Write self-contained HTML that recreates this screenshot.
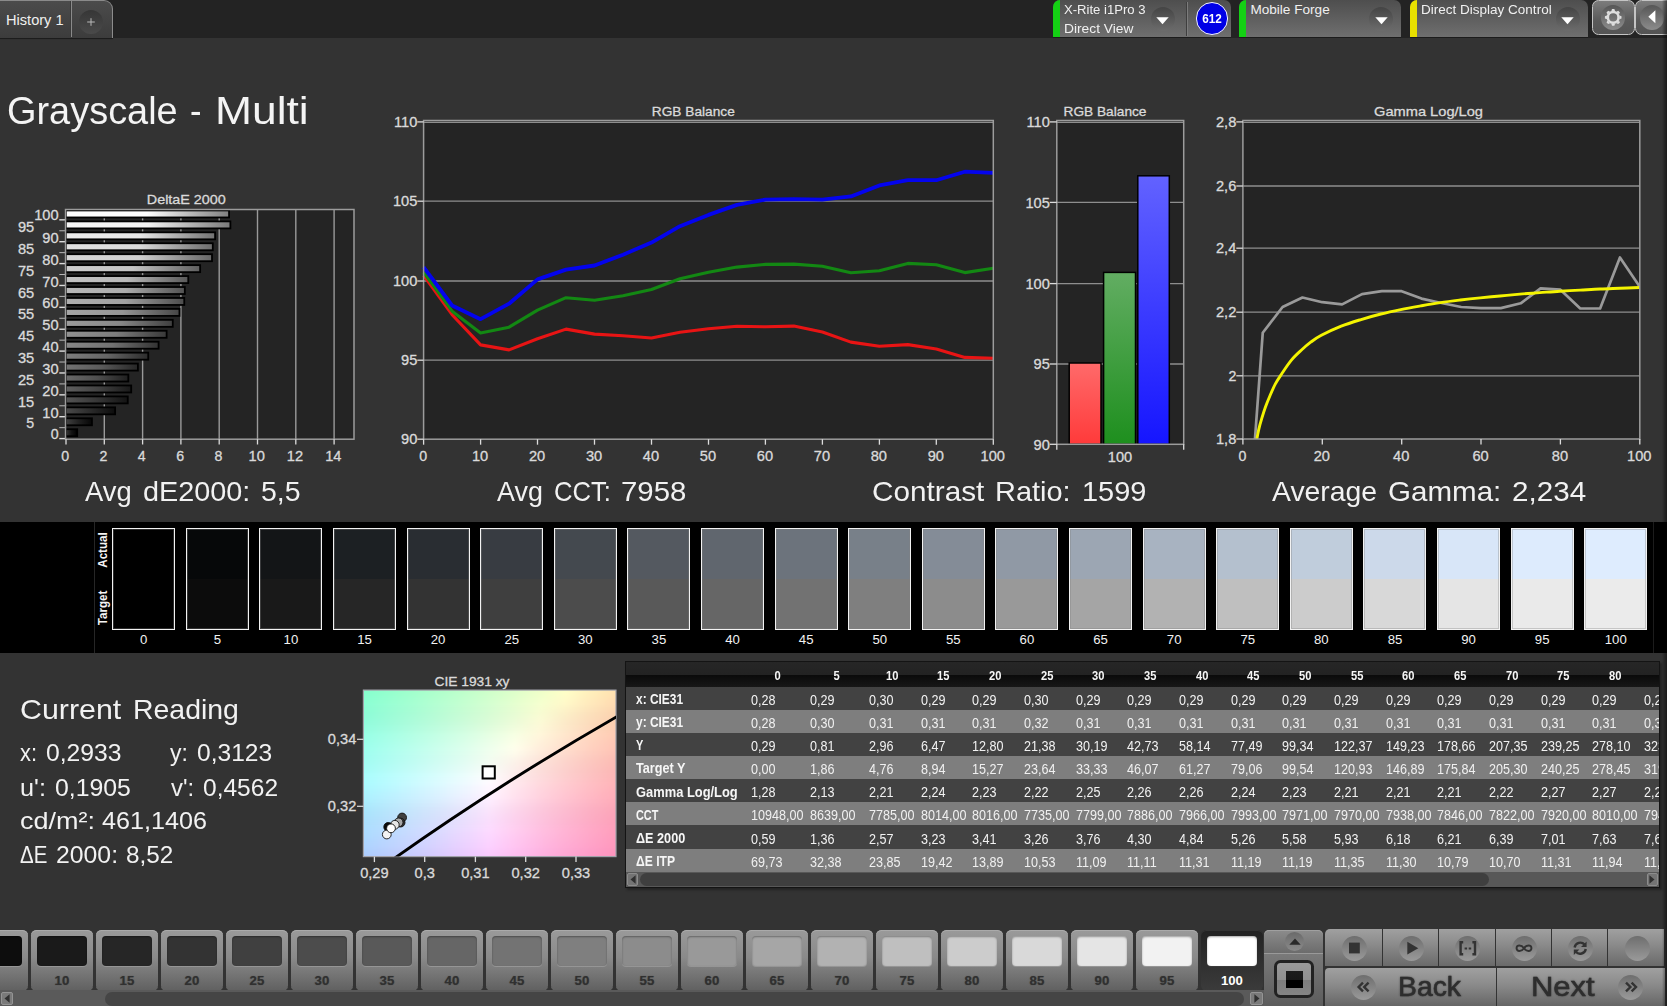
<!DOCTYPE html><html lang="en"><head><meta charset="utf-8"><title>Grayscale - Multi</title><style>
*{margin:0;padding:0;box-sizing:border-box}
html,body{width:1667px;height:1006px;overflow:hidden;background:#333333}
body{font-family:"Liberation Sans",sans-serif;position:relative;color:#e6e6e6}
.t{position:absolute;white-space:nowrap;line-height:1;display:inline-block}
.abs{position:absolute}
svg{position:absolute;overflow:visible}
svg text{font-family:"Liberation Sans",sans-serif}
</style></head><body>
<div id="topbar" class="abs" style="left:0;top:0;width:1667px;height:38px;background:#232323">
<div class="abs" style="left:-1px;top:0;width:114px;height:37.5px;border-radius:0 9px 0 0;background:linear-gradient(#4b4b4b,#3c3c3c);border-top:1px solid #8a8a8a;border-right:1px solid #8c8c8c;box-shadow:0 1px 1px #1a1a1a"></div>
<div class="abs" style="left:71px;top:1px;width:1px;height:36px;background:#8a8a8a"></div>
<div class="abs" style="left:70px;top:1px;width:1px;height:36px;background:#3a3a3a"></div>
<span class="t" style="left:6.00px;top:13.24px;font-size:14.60px;color:#f0f0ee;">History 1</span>
<div class="abs" style="left:78.6px;top:9.5px;width:24px;height:24px;border-radius:50%;background:linear-gradient(#363636,#4a4a4a)"></div>
<svg style="left:86px;top:17px" width="10" height="10" viewBox="0 0 10 10"><path d="M5 1.2V8.8M1.2 5H8.8" stroke="#b8b8b8" stroke-width="1" fill="none"/></svg>
<div class="abs" style="left:1052.7px;top:0;width:178.3px;height:36.5px;border-radius:7px 7px 0 0;background:linear-gradient(#4e4e4e,#6f6f6f);overflow:hidden;box-shadow:0 1px 0 #1c1c1c"><div class="abs" style="left:0;top:0;width:7px;height:37px;background:#14d014"></div></div>
<span class="t" style="left:1064.20px;top:3.09px;font-size:13.60px;color:#f0f0f0;transform:scaleX(0.9640);transform-origin:0 0;">X-Rite i1Pro 3</span>
<span class="t" style="left:1064.20px;top:21.99px;font-size:13.60px;color:#f0f0f0;transform:scaleX(1.0143);transform-origin:0 0;">Direct View</span>
<div class="abs" style="left:1150.5px;top:6.6px;width:24px;height:24px;border-radius:50%;background:linear-gradient(#444,#6c6c6c)"></div>
<svg style="left:1156.0px;top:16.5px" width="13" height="8" viewBox="0 0 13 8"><path d="M0.3 0.3H12.7L6.5 7.2Z" fill="#ffffff"/></svg>
<div class="abs" style="left:1186px;top:2px;width:1px;height:34px;background:#3e3e3e"></div><div class="abs" style="left:1187px;top:2px;width:1px;height:34px;background:#7c7c7c"></div>
<div class="abs" style="left:1195.7px;top:2.3px;width:32.6px;height:32.6px;border-radius:50%;background:#0000e6;border:1.5px solid #f4f4ff"></div>
<span class="t" style="left:1201.99px;top:12.64px;font-size:12.00px;color:#ffffff;font-weight:700;transform:scaleX(0.9741);transform-origin:50% 0;">612</span>
<div class="abs" style="left:1238.9px;top:0;width:162.1px;height:36.5px;border-radius:7px 7px 0 0;background:linear-gradient(#4e4e4e,#6f6f6f);overflow:hidden;box-shadow:0 1px 0 #1c1c1c"><div class="abs" style="left:0;top:0;width:7px;height:37px;background:#14d014"></div></div>
<span class="t" style="left:1250.40px;top:3.09px;font-size:13.60px;color:#f0f0f0;">Mobile Forge</span>
<div class="abs" style="left:1369.4px;top:6.6px;width:24px;height:24px;border-radius:50%;background:linear-gradient(#444,#6c6c6c)"></div>
<svg style="left:1374.9px;top:16.5px" width="13" height="8" viewBox="0 0 13 8"><path d="M0.3 0.3H12.7L6.5 7.2Z" fill="#ffffff"/></svg>
<div class="abs" style="left:1409.5px;top:0;width:178.0px;height:36.5px;border-radius:7px 7px 0 0;background:linear-gradient(#4e4e4e,#6f6f6f);overflow:hidden;box-shadow:0 1px 0 #1c1c1c"><div class="abs" style="left:0;top:0;width:7px;height:37px;background:#e8e000"></div></div>
<span class="t" style="left:1421.00px;top:3.09px;font-size:13.60px;color:#f0f0f0;transform:scaleX(0.9939);transform-origin:0 0;">Direct Display Control</span>
<div class="abs" style="left:1555.5px;top:6.6px;width:24px;height:24px;border-radius:50%;background:linear-gradient(#444,#6c6c6c)"></div>
<svg style="left:1561.0px;top:16.5px" width="13" height="8" viewBox="0 0 13 8"><path d="M0.3 0.3H12.7L6.5 7.2Z" fill="#ffffff"/></svg>
<div class="abs" style="left:1591.5px;top:-0.2px;width:43.3px;height:34.8px;border-radius:6.5px;border:1.3px solid #c4c4c4;background:linear-gradient(#7c7c7c,#5a5a5a 60%,#545454)"></div>
<div class="abs" style="left:1601px;top:5.3px;width:24.4px;height:24.4px;border-radius:50%;background:linear-gradient(#565656,#8c8c8c)"></div>
<svg style="left:0;top:0" width="1667" height="38" viewBox="0 0 1667 38"><g transform="translate(1613.2 17.4)"><path d="M-1.9 -6.2L-1.2 -8.3H1.2L1.9 -6.2Z" transform="rotate(0)" fill="#dedede"/><path d="M-1.9 -6.2L-1.2 -8.3H1.2L1.9 -6.2Z" transform="rotate(45)" fill="#dedede"/><path d="M-1.9 -6.2L-1.2 -8.3H1.2L1.9 -6.2Z" transform="rotate(90)" fill="#dedede"/><path d="M-1.9 -6.2L-1.2 -8.3H1.2L1.9 -6.2Z" transform="rotate(135)" fill="#dedede"/><path d="M-1.9 -6.2L-1.2 -8.3H1.2L1.9 -6.2Z" transform="rotate(180)" fill="#dedede"/><path d="M-1.9 -6.2L-1.2 -8.3H1.2L1.9 -6.2Z" transform="rotate(225)" fill="#dedede"/><path d="M-1.9 -6.2L-1.2 -8.3H1.2L1.9 -6.2Z" transform="rotate(270)" fill="#dedede"/><path d="M-1.9 -6.2L-1.2 -8.3H1.2L1.9 -6.2Z" transform="rotate(315)" fill="#dedede"/><circle r="5.35" fill="none" stroke="#dedede" stroke-width="2.5"/></g></svg>
<div class="abs" style="left:1634.8px;top:-0.2px;width:44px;height:34.8px;border-radius:6.5px;border:1.3px solid #c4c4c4;background:linear-gradient(#7c7c7c,#5a5a5a 60%,#545454)"></div>
<div class="abs" style="left:1639.6px;top:5.3px;width:24.4px;height:24.4px;border-radius:50%;background:linear-gradient(#565656,#8c8c8c)"></div>
<svg style="left:1647.8px;top:10px" width="8" height="14" viewBox="0 0 8 14"><path d="M7.4 0.3V13.2L0.3 6.7Z" fill="#ffffff"/></svg>
</div>
<h1 class="abs" style="left:0;top:0;font-weight:400"><span class="t" style="left:6.90px;top:90.72px;font-size:39.20px;color:#f4f4f4;transform:scaleX(0.9677);transform-origin:0 0;">Grayscale</span><span class="t" style="left:189.80px;top:90.72px;font-size:39.20px;color:#f4f4f4;transform:scaleX(0.8813);transform-origin:0 0;">-</span><span class="t" style="left:214.60px;top:90.72px;font-size:39.20px;color:#f4f4f4;transform:scaleX(1.1328);transform-origin:0 0;">Multi</span></h1>
<svg id="charts" style="left:0;top:90px" width="1667" height="390" viewBox="0 90 1667 390">
<defs>
<linearGradient id="db0" x1="0" x2="1" y1="0" y2="0"><stop offset="0" stop-color="rgb(56,56,56)"/><stop offset="0.5" stop-color="rgb(20,20,20)"/><stop offset="1" stop-color="rgb(0,0,0)"/></linearGradient>
<linearGradient id="db1" x1="0" x2="1" y1="0" y2="0"><stop offset="0" stop-color="rgb(66,66,66)"/><stop offset="0.5" stop-color="rgb(32,32,32)"/><stop offset="1" stop-color="rgb(6,6,6)"/></linearGradient>
<linearGradient id="db2" x1="0" x2="1" y1="0" y2="0"><stop offset="0" stop-color="rgb(75,75,75)"/><stop offset="0.5" stop-color="rgb(43,43,43)"/><stop offset="1" stop-color="rgb(12,12,12)"/></linearGradient>
<linearGradient id="db3" x1="0" x2="1" y1="0" y2="0"><stop offset="0" stop-color="rgb(85,85,85)"/><stop offset="0.5" stop-color="rgb(55,55,55)"/><stop offset="1" stop-color="rgb(19,19,19)"/></linearGradient>
<linearGradient id="db4" x1="0" x2="1" y1="0" y2="0"><stop offset="0" stop-color="rgb(95,95,95)"/><stop offset="0.5" stop-color="rgb(67,67,67)"/><stop offset="1" stop-color="rgb(25,25,25)"/></linearGradient>
<linearGradient id="db5" x1="0" x2="1" y1="0" y2="0"><stop offset="0" stop-color="rgb(105,105,105)"/><stop offset="0.5" stop-color="rgb(79,79,79)"/><stop offset="1" stop-color="rgb(31,31,31)"/></linearGradient>
<linearGradient id="db6" x1="0" x2="1" y1="0" y2="0"><stop offset="0" stop-color="rgb(115,115,115)"/><stop offset="0.5" stop-color="rgb(90,90,90)"/><stop offset="1" stop-color="rgb(38,38,38)"/></linearGradient>
<linearGradient id="db7" x1="0" x2="1" y1="0" y2="0"><stop offset="0" stop-color="rgb(125,125,125)"/><stop offset="0.5" stop-color="rgb(102,102,102)"/><stop offset="1" stop-color="rgb(44,44,44)"/></linearGradient>
<linearGradient id="db8" x1="0" x2="1" y1="0" y2="0"><stop offset="0" stop-color="rgb(135,135,135)"/><stop offset="0.5" stop-color="rgb(114,114,114)"/><stop offset="1" stop-color="rgb(51,51,51)"/></linearGradient>
<linearGradient id="db9" x1="0" x2="1" y1="0" y2="0"><stop offset="0" stop-color="rgb(145,145,145)"/><stop offset="0.5" stop-color="rgb(125,125,125)"/><stop offset="1" stop-color="rgb(57,57,57)"/></linearGradient>
<linearGradient id="db10" x1="0" x2="1" y1="0" y2="0"><stop offset="0" stop-color="rgb(155,155,155)"/><stop offset="0.5" stop-color="rgb(137,137,137)"/><stop offset="1" stop-color="rgb(63,63,63)"/></linearGradient>
<linearGradient id="db11" x1="0" x2="1" y1="0" y2="0"><stop offset="0" stop-color="rgb(165,165,165)"/><stop offset="0.5" stop-color="rgb(149,149,149)"/><stop offset="1" stop-color="rgb(70,70,70)"/></linearGradient>
<linearGradient id="db12" x1="0" x2="1" y1="0" y2="0"><stop offset="0" stop-color="rgb(175,175,175)"/><stop offset="0.5" stop-color="rgb(161,161,161)"/><stop offset="1" stop-color="rgb(76,76,76)"/></linearGradient>
<linearGradient id="db13" x1="0" x2="1" y1="0" y2="0"><stop offset="0" stop-color="rgb(185,185,185)"/><stop offset="0.5" stop-color="rgb(172,172,172)"/><stop offset="1" stop-color="rgb(82,82,82)"/></linearGradient>
<linearGradient id="db14" x1="0" x2="1" y1="0" y2="0"><stop offset="0" stop-color="rgb(195,195,195)"/><stop offset="0.5" stop-color="rgb(184,184,184)"/><stop offset="1" stop-color="rgb(89,89,89)"/></linearGradient>
<linearGradient id="db15" x1="0" x2="1" y1="0" y2="0"><stop offset="0" stop-color="rgb(205,205,205)"/><stop offset="0.5" stop-color="rgb(196,196,196)"/><stop offset="1" stop-color="rgb(95,95,95)"/></linearGradient>
<linearGradient id="db16" x1="0" x2="1" y1="0" y2="0"><stop offset="0" stop-color="rgb(215,215,215)"/><stop offset="0.5" stop-color="rgb(208,208,208)"/><stop offset="1" stop-color="rgb(102,102,102)"/></linearGradient>
<linearGradient id="db17" x1="0" x2="1" y1="0" y2="0"><stop offset="0" stop-color="rgb(225,225,225)"/><stop offset="0.5" stop-color="rgb(219,219,219)"/><stop offset="1" stop-color="rgb(108,108,108)"/></linearGradient>
<linearGradient id="db18" x1="0" x2="1" y1="0" y2="0"><stop offset="0" stop-color="rgb(235,235,235)"/><stop offset="0.5" stop-color="rgb(231,231,231)"/><stop offset="1" stop-color="rgb(114,114,114)"/></linearGradient>
<linearGradient id="db19" x1="0" x2="1" y1="0" y2="0"><stop offset="0" stop-color="rgb(245,245,245)"/><stop offset="0.5" stop-color="rgb(243,243,243)"/><stop offset="1" stop-color="rgb(121,121,121)"/></linearGradient>
<linearGradient id="db20" x1="0" x2="1" y1="0" y2="0"><stop offset="0" stop-color="rgb(254,254,254)"/><stop offset="0.5" stop-color="rgb(254,254,254)"/><stop offset="1" stop-color="rgb(127,127,127)"/></linearGradient>
<linearGradient id="gr" x1="0" x2="0" y1="0" y2="1"><stop offset="0" stop-color="#ff6a6a"/><stop offset="1" stop-color="#ff3a3a"/></linearGradient>
<linearGradient id="gg" x1="0" x2="0" y1="0" y2="1"><stop offset="0" stop-color="#62ad62"/><stop offset="1" stop-color="#1e8f1e"/></linearGradient>
<linearGradient id="gb" x1="0" x2="0" y1="0" y2="1"><stop offset="0" stop-color="#6262ff"/><stop offset="1" stop-color="#1515ff"/></linearGradient>
<clipPath id="cg"><rect x="1243" y="121" width="397" height="318"/></clipPath>
</defs>
<g id="chart-deltae">
<text x="186.30" y="203.60" font-size="13.40" fill="#dadada" text-anchor="middle" textLength="79.00" lengthAdjust="spacingAndGlyphs" stroke="#dadada" stroke-width="0.3">DeltaE 2000</text>
<rect x="65.5" y="209.5" width="288.5" height="229.7" fill="#242424"/>
<line x1="104.3" y1="209.5" x2="104.3" y2="439.2" stroke="#9a9a9a" stroke-width="1.4"/>
<line x1="142.6" y1="209.5" x2="142.6" y2="439.2" stroke="#9a9a9a" stroke-width="1.4"/>
<line x1="180.9" y1="209.5" x2="180.9" y2="439.2" stroke="#9a9a9a" stroke-width="1.4"/>
<line x1="219.2" y1="209.5" x2="219.2" y2="439.2" stroke="#9a9a9a" stroke-width="1.4"/>
<line x1="257.5" y1="209.5" x2="257.5" y2="439.2" stroke="#9a9a9a" stroke-width="1.4"/>
<line x1="295.8" y1="209.5" x2="295.8" y2="439.2" stroke="#9a9a9a" stroke-width="1.4"/>
<line x1="334.1" y1="209.5" x2="334.1" y2="439.2" stroke="#9a9a9a" stroke-width="1.4"/>
<rect x="65.80" y="210.45" width="163.26" height="7.00" fill="url(#db20)" stroke="#000" stroke-width="1.8"/>
<line x1="59.3" y1="219.84" x2="65.5" y2="219.84" stroke="#dcdcdc" stroke-width="1.4"/>
<text x="58.60" y="219.97" font-size="14.20" fill="#dadada" text-anchor="end" textLength="24.40" lengthAdjust="spacingAndGlyphs" stroke="#dadada" stroke-width="0.3">100</text>
<rect x="65.80" y="221.39" width="164.60" height="7.00" fill="url(#db19)" stroke="#000" stroke-width="1.8"/>
<line x1="59.3" y1="230.78" x2="65.5" y2="230.78" stroke="#dcdcdc" stroke-width="0.8"/>
<text x="34.20" y="231.91" font-size="14.20" fill="#dadada" text-anchor="end" textLength="16.27" lengthAdjust="spacingAndGlyphs" stroke="#dadada" stroke-width="0.3">95</text>
<rect x="65.80" y="232.33" width="149.28" height="7.00" fill="url(#db18)" stroke="#000" stroke-width="1.8"/>
<line x1="59.3" y1="241.71" x2="65.5" y2="241.71" stroke="#dcdcdc" stroke-width="1.4"/>
<text x="58.60" y="242.85" font-size="14.20" fill="#dadada" text-anchor="end" textLength="16.27" lengthAdjust="spacingAndGlyphs" stroke="#dadada" stroke-width="0.3">90</text>
<rect x="65.80" y="243.26" width="146.98" height="7.00" fill="url(#db17)" stroke="#000" stroke-width="1.8"/>
<line x1="59.3" y1="252.65" x2="65.5" y2="252.65" stroke="#dcdcdc" stroke-width="0.8"/>
<text x="34.20" y="253.78" font-size="14.20" fill="#dadada" text-anchor="end" textLength="16.27" lengthAdjust="spacingAndGlyphs" stroke="#dadada" stroke-width="0.3">85</text>
<rect x="65.80" y="254.20" width="146.21" height="7.00" fill="url(#db16)" stroke="#000" stroke-width="1.8"/>
<line x1="59.3" y1="263.59" x2="65.5" y2="263.59" stroke="#dcdcdc" stroke-width="1.4"/>
<text x="58.60" y="264.72" font-size="14.20" fill="#dadada" text-anchor="end" textLength="16.27" lengthAdjust="spacingAndGlyphs" stroke="#dadada" stroke-width="0.3">80</text>
<rect x="65.80" y="265.14" width="134.34" height="7.00" fill="url(#db15)" stroke="#000" stroke-width="1.8"/>
<line x1="59.3" y1="274.53" x2="65.5" y2="274.53" stroke="#dcdcdc" stroke-width="0.8"/>
<text x="34.20" y="275.66" font-size="14.20" fill="#dadada" text-anchor="end" textLength="16.27" lengthAdjust="spacingAndGlyphs" stroke="#dadada" stroke-width="0.3">75</text>
<rect x="65.80" y="276.08" width="122.47" height="7.00" fill="url(#db14)" stroke="#000" stroke-width="1.8"/>
<line x1="59.3" y1="285.47" x2="65.5" y2="285.47" stroke="#dcdcdc" stroke-width="1.4"/>
<text x="58.60" y="286.60" font-size="14.20" fill="#dadada" text-anchor="end" textLength="16.27" lengthAdjust="spacingAndGlyphs" stroke="#dadada" stroke-width="0.3">70</text>
<rect x="65.80" y="287.02" width="119.02" height="7.00" fill="url(#db13)" stroke="#000" stroke-width="1.8"/>
<line x1="59.3" y1="296.40" x2="65.5" y2="296.40" stroke="#dcdcdc" stroke-width="0.8"/>
<text x="34.20" y="297.54" font-size="14.20" fill="#dadada" text-anchor="end" textLength="16.27" lengthAdjust="spacingAndGlyphs" stroke="#dadada" stroke-width="0.3">65</text>
<rect x="65.80" y="297.95" width="118.45" height="7.00" fill="url(#db12)" stroke="#000" stroke-width="1.8"/>
<line x1="59.3" y1="307.34" x2="65.5" y2="307.34" stroke="#dcdcdc" stroke-width="1.4"/>
<text x="58.60" y="308.47" font-size="14.20" fill="#dadada" text-anchor="end" textLength="16.27" lengthAdjust="spacingAndGlyphs" stroke="#dadada" stroke-width="0.3">60</text>
<rect x="65.80" y="308.89" width="113.66" height="7.00" fill="url(#db11)" stroke="#000" stroke-width="1.8"/>
<line x1="59.3" y1="318.28" x2="65.5" y2="318.28" stroke="#dcdcdc" stroke-width="0.8"/>
<text x="34.20" y="319.41" font-size="14.20" fill="#dadada" text-anchor="end" textLength="16.27" lengthAdjust="spacingAndGlyphs" stroke="#dadada" stroke-width="0.3">55</text>
<rect x="65.80" y="319.83" width="106.96" height="7.00" fill="url(#db10)" stroke="#000" stroke-width="1.8"/>
<line x1="59.3" y1="329.22" x2="65.5" y2="329.22" stroke="#dcdcdc" stroke-width="1.4"/>
<text x="58.60" y="330.35" font-size="14.20" fill="#dadada" text-anchor="end" textLength="16.27" lengthAdjust="spacingAndGlyphs" stroke="#dadada" stroke-width="0.3">50</text>
<rect x="65.80" y="330.77" width="100.83" height="7.00" fill="url(#db9)" stroke="#000" stroke-width="1.8"/>
<line x1="59.3" y1="340.16" x2="65.5" y2="340.16" stroke="#dcdcdc" stroke-width="0.8"/>
<text x="34.20" y="341.29" font-size="14.20" fill="#dadada" text-anchor="end" textLength="16.27" lengthAdjust="spacingAndGlyphs" stroke="#dadada" stroke-width="0.3">45</text>
<rect x="65.80" y="341.71" width="92.79" height="7.00" fill="url(#db8)" stroke="#000" stroke-width="1.8"/>
<line x1="59.3" y1="351.10" x2="65.5" y2="351.10" stroke="#dcdcdc" stroke-width="1.4"/>
<text x="58.60" y="352.23" font-size="14.20" fill="#dadada" text-anchor="end" textLength="16.27" lengthAdjust="spacingAndGlyphs" stroke="#dadada" stroke-width="0.3">40</text>
<rect x="65.80" y="352.65" width="82.44" height="7.00" fill="url(#db7)" stroke="#000" stroke-width="1.8"/>
<line x1="59.3" y1="362.03" x2="65.5" y2="362.03" stroke="#dcdcdc" stroke-width="0.8"/>
<text x="34.20" y="363.16" font-size="14.20" fill="#dadada" text-anchor="end" textLength="16.27" lengthAdjust="spacingAndGlyphs" stroke="#dadada" stroke-width="0.3">35</text>
<rect x="65.80" y="363.58" width="72.10" height="7.00" fill="url(#db6)" stroke="#000" stroke-width="1.8"/>
<line x1="59.3" y1="372.97" x2="65.5" y2="372.97" stroke="#dcdcdc" stroke-width="1.4"/>
<text x="58.60" y="374.10" font-size="14.20" fill="#dadada" text-anchor="end" textLength="16.27" lengthAdjust="spacingAndGlyphs" stroke="#dadada" stroke-width="0.3">30</text>
<rect x="65.80" y="374.52" width="62.53" height="7.00" fill="url(#db5)" stroke="#000" stroke-width="1.8"/>
<line x1="59.3" y1="383.91" x2="65.5" y2="383.91" stroke="#dcdcdc" stroke-width="0.8"/>
<text x="34.20" y="385.04" font-size="14.20" fill="#dadada" text-anchor="end" textLength="16.27" lengthAdjust="spacingAndGlyphs" stroke="#dadada" stroke-width="0.3">25</text>
<rect x="65.80" y="385.46" width="65.40" height="7.00" fill="url(#db4)" stroke="#000" stroke-width="1.8"/>
<line x1="59.3" y1="394.85" x2="65.5" y2="394.85" stroke="#dcdcdc" stroke-width="1.4"/>
<text x="58.60" y="395.98" font-size="14.20" fill="#dadada" text-anchor="end" textLength="16.27" lengthAdjust="spacingAndGlyphs" stroke="#dadada" stroke-width="0.3">20</text>
<rect x="65.80" y="396.40" width="61.95" height="7.00" fill="url(#db3)" stroke="#000" stroke-width="1.8"/>
<line x1="59.3" y1="405.79" x2="65.5" y2="405.79" stroke="#dcdcdc" stroke-width="0.8"/>
<text x="34.20" y="406.92" font-size="14.20" fill="#dadada" text-anchor="end" textLength="16.27" lengthAdjust="spacingAndGlyphs" stroke="#dadada" stroke-width="0.3">15</text>
<rect x="65.80" y="407.34" width="49.32" height="7.00" fill="url(#db2)" stroke="#000" stroke-width="1.8"/>
<line x1="59.3" y1="416.72" x2="65.5" y2="416.72" stroke="#dcdcdc" stroke-width="1.4"/>
<text x="58.60" y="417.85" font-size="14.20" fill="#dadada" text-anchor="end" textLength="16.27" lengthAdjust="spacingAndGlyphs" stroke="#dadada" stroke-width="0.3">10</text>
<rect x="65.80" y="418.27" width="26.14" height="7.00" fill="url(#db1)" stroke="#000" stroke-width="1.8"/>
<line x1="59.3" y1="427.66" x2="65.5" y2="427.66" stroke="#dcdcdc" stroke-width="0.8"/>
<text x="34.20" y="428.29" font-size="14.20" fill="#dadada" text-anchor="end" stroke="#dadada" stroke-width="0.3">5</text>
<rect x="65.80" y="429.21" width="11.40" height="7.00" fill="url(#db0)" stroke="#000" stroke-width="1.8"/>
<line x1="59.3" y1="438.60" x2="65.5" y2="438.60" stroke="#dcdcdc" stroke-width="1.4"/>
<text x="58.60" y="438.73" font-size="14.20" fill="#dadada" text-anchor="end" stroke="#dadada" stroke-width="0.3">0</text>
<rect x="65.5" y="209.5" width="288.5" height="229.7" fill="none" stroke="#9c9c9c" stroke-width="1.5"/>
<line x1="66.0" y1="439.2" x2="66.0" y2="444.5" stroke="#dcdcdc" stroke-width="1.3"/>
<text x="65.20" y="461.20" font-size="14.20" fill="#dadada" text-anchor="middle" stroke="#dadada" stroke-width="0.3">0</text>
<line x1="104.3" y1="439.2" x2="104.3" y2="444.5" stroke="#dcdcdc" stroke-width="1.3"/>
<text x="103.50" y="461.20" font-size="14.20" fill="#dadada" text-anchor="middle" stroke="#dadada" stroke-width="0.3">2</text>
<line x1="142.6" y1="439.2" x2="142.6" y2="444.5" stroke="#dcdcdc" stroke-width="1.3"/>
<text x="141.80" y="461.20" font-size="14.20" fill="#dadada" text-anchor="middle" stroke="#dadada" stroke-width="0.3">4</text>
<line x1="180.9" y1="439.2" x2="180.9" y2="444.5" stroke="#dcdcdc" stroke-width="1.3"/>
<text x="180.10" y="461.20" font-size="14.20" fill="#dadada" text-anchor="middle" stroke="#dadada" stroke-width="0.3">6</text>
<line x1="219.2" y1="439.2" x2="219.2" y2="444.5" stroke="#dcdcdc" stroke-width="1.3"/>
<text x="218.40" y="461.20" font-size="14.20" fill="#dadada" text-anchor="middle" stroke="#dadada" stroke-width="0.3">8</text>
<line x1="257.5" y1="439.2" x2="257.5" y2="444.5" stroke="#dcdcdc" stroke-width="1.3"/>
<text x="256.70" y="461.20" font-size="14.20" fill="#dadada" text-anchor="middle" textLength="16.27" lengthAdjust="spacingAndGlyphs" stroke="#dadada" stroke-width="0.3">10</text>
<line x1="295.8" y1="439.2" x2="295.8" y2="444.5" stroke="#dcdcdc" stroke-width="1.3"/>
<text x="295.00" y="461.20" font-size="14.20" fill="#dadada" text-anchor="middle" textLength="16.27" lengthAdjust="spacingAndGlyphs" stroke="#dadada" stroke-width="0.3">12</text>
<line x1="334.1" y1="439.2" x2="334.1" y2="444.5" stroke="#dcdcdc" stroke-width="1.3"/>
<text x="333.30" y="461.20" font-size="14.20" fill="#dadada" text-anchor="middle" textLength="16.27" lengthAdjust="spacingAndGlyphs" stroke="#dadada" stroke-width="0.3">14</text>
</g>
<g id="chart-rgb-balance">
<text x="693.30" y="115.60" font-size="13.40" fill="#dadada" text-anchor="middle" textLength="83.00" lengthAdjust="spacingAndGlyphs" stroke="#dadada" stroke-width="0.3">RGB Balance</text>
<rect x="423.6" y="120.5" width="569.7" height="318.7" fill="#242424"/>
<line x1="423.6" y1="122.4" x2="993.3" y2="122.4" stroke="#8e8e8e" stroke-width="1.3"/>
<line x1="423.6" y1="201.2" x2="993.3" y2="201.2" stroke="#8e8e8e" stroke-width="1.3"/>
<line x1="423.6" y1="281.0" x2="993.3" y2="281.0" stroke="#8e8e8e" stroke-width="1.3"/>
<line x1="423.6" y1="360.2" x2="993.3" y2="360.2" stroke="#8e8e8e" stroke-width="1.3"/>
<path d="M423.60 275.30L452.09 314.70L480.57 344.90L509.06 349.90L537.54 338.70L566.02 329.10L594.51 334.10L623.00 335.70L651.48 338.00L679.96 332.30L708.45 328.80L736.93 326.30L765.42 326.80L793.90 326.10L822.39 332.00L850.88 342.10L879.36 346.20L907.85 344.60L936.33 349.00L964.81 357.40L993.30 358.30" fill="none" stroke="#e81414" stroke-width="3.1" stroke-linejoin="round" stroke-linecap="butt"/>
<path d="M423.60 272.40L452.09 311.20L480.57 333.00L509.06 327.20L537.54 310.10L566.02 297.70L594.51 300.30L623.00 295.70L651.48 289.50L679.96 278.80L708.45 272.30L736.93 267.10L765.42 264.40L793.90 264.10L822.39 266.20L850.88 272.80L879.36 270.80L907.85 263.40L936.33 264.80L964.81 272.60L993.30 268.20" fill="none" stroke="#138813" stroke-width="3.1" stroke-linejoin="round" stroke-linecap="butt"/>
<path d="M423.60 267.10L452.09 305.50L480.57 319.20L509.06 303.70L537.54 279.40L566.02 269.60L594.51 265.50L623.00 254.70L651.48 242.60L679.96 226.20L708.45 214.90L736.93 204.90L765.42 199.60L793.90 199.20L822.39 199.60L850.88 196.40L879.36 185.40L907.85 180.20L936.33 180.20L964.81 171.70L993.30 172.90" fill="none" stroke="#0404ee" stroke-width="3.8" stroke-linejoin="round" stroke-linecap="butt"/>
<rect x="423.6" y="120.5" width="569.7" height="318.7" fill="none" stroke="#9c9c9c" stroke-width="1.5"/>
<line x1="417.3" y1="121.9" x2="423.6" y2="121.9" stroke="#dcdcdc" stroke-width="1.3"/>
<text x="417.30" y="127.10" font-size="14.20" fill="#dadada" text-anchor="end" textLength="23.31" lengthAdjust="spacingAndGlyphs" stroke="#dadada" stroke-width="0.3">110</text>
<line x1="417.3" y1="201.2" x2="423.6" y2="201.2" stroke="#dcdcdc" stroke-width="1.3"/>
<text x="417.30" y="206.40" font-size="14.20" fill="#dadada" text-anchor="end" textLength="24.40" lengthAdjust="spacingAndGlyphs" stroke="#dadada" stroke-width="0.3">105</text>
<line x1="417.3" y1="281.0" x2="423.6" y2="281.0" stroke="#dcdcdc" stroke-width="1.3"/>
<text x="417.30" y="286.20" font-size="14.20" fill="#dadada" text-anchor="end" textLength="24.40" lengthAdjust="spacingAndGlyphs" stroke="#dadada" stroke-width="0.3">100</text>
<line x1="417.3" y1="360.2" x2="423.6" y2="360.2" stroke="#dcdcdc" stroke-width="1.3"/>
<text x="417.30" y="365.40" font-size="14.20" fill="#dadada" text-anchor="end" textLength="16.27" lengthAdjust="spacingAndGlyphs" stroke="#dadada" stroke-width="0.3">95</text>
<line x1="417.3" y1="439.2" x2="423.6" y2="439.2" stroke="#dcdcdc" stroke-width="1.3"/>
<text x="417.30" y="444.40" font-size="14.20" fill="#dadada" text-anchor="end" textLength="16.27" lengthAdjust="spacingAndGlyphs" stroke="#dadada" stroke-width="0.3">90</text>
<line x1="423.6" y1="439.2" x2="423.6" y2="444.7" stroke="#dcdcdc" stroke-width="1.3"/>
<text x="423.10" y="460.80" font-size="14.20" fill="#dadada" text-anchor="middle" stroke="#dadada" stroke-width="0.3">0</text>
<line x1="480.6" y1="439.2" x2="480.6" y2="444.7" stroke="#dcdcdc" stroke-width="1.3"/>
<text x="480.07" y="460.80" font-size="14.20" fill="#dadada" text-anchor="middle" textLength="16.27" lengthAdjust="spacingAndGlyphs" stroke="#dadada" stroke-width="0.3">10</text>
<line x1="537.5" y1="439.2" x2="537.5" y2="444.7" stroke="#dcdcdc" stroke-width="1.3"/>
<text x="537.04" y="460.80" font-size="14.20" fill="#dadada" text-anchor="middle" textLength="16.27" lengthAdjust="spacingAndGlyphs" stroke="#dadada" stroke-width="0.3">20</text>
<line x1="594.5" y1="439.2" x2="594.5" y2="444.7" stroke="#dcdcdc" stroke-width="1.3"/>
<text x="594.01" y="460.80" font-size="14.20" fill="#dadada" text-anchor="middle" textLength="16.27" lengthAdjust="spacingAndGlyphs" stroke="#dadada" stroke-width="0.3">30</text>
<line x1="651.5" y1="439.2" x2="651.5" y2="444.7" stroke="#dcdcdc" stroke-width="1.3"/>
<text x="650.98" y="460.80" font-size="14.20" fill="#dadada" text-anchor="middle" textLength="16.27" lengthAdjust="spacingAndGlyphs" stroke="#dadada" stroke-width="0.3">40</text>
<line x1="708.5" y1="439.2" x2="708.5" y2="444.7" stroke="#dcdcdc" stroke-width="1.3"/>
<text x="707.95" y="460.80" font-size="14.20" fill="#dadada" text-anchor="middle" textLength="16.27" lengthAdjust="spacingAndGlyphs" stroke="#dadada" stroke-width="0.3">50</text>
<line x1="765.4" y1="439.2" x2="765.4" y2="444.7" stroke="#dcdcdc" stroke-width="1.3"/>
<text x="764.92" y="460.80" font-size="14.20" fill="#dadada" text-anchor="middle" textLength="16.27" lengthAdjust="spacingAndGlyphs" stroke="#dadada" stroke-width="0.3">60</text>
<line x1="822.4" y1="439.2" x2="822.4" y2="444.7" stroke="#dcdcdc" stroke-width="1.3"/>
<text x="821.89" y="460.80" font-size="14.20" fill="#dadada" text-anchor="middle" textLength="16.27" lengthAdjust="spacingAndGlyphs" stroke="#dadada" stroke-width="0.3">70</text>
<line x1="879.4" y1="439.2" x2="879.4" y2="444.7" stroke="#dcdcdc" stroke-width="1.3"/>
<text x="878.86" y="460.80" font-size="14.20" fill="#dadada" text-anchor="middle" textLength="16.27" lengthAdjust="spacingAndGlyphs" stroke="#dadada" stroke-width="0.3">80</text>
<line x1="936.3" y1="439.2" x2="936.3" y2="444.7" stroke="#dcdcdc" stroke-width="1.3"/>
<text x="935.83" y="460.80" font-size="14.20" fill="#dadada" text-anchor="middle" textLength="16.27" lengthAdjust="spacingAndGlyphs" stroke="#dadada" stroke-width="0.3">90</text>
<line x1="993.3" y1="439.2" x2="993.3" y2="444.7" stroke="#dcdcdc" stroke-width="1.3"/>
<text x="992.80" y="460.80" font-size="14.20" fill="#dadada" text-anchor="middle" textLength="24.40" lengthAdjust="spacingAndGlyphs" stroke="#dadada" stroke-width="0.3">100</text>
</g>
<g id="chart-rgb-bars">
<text x="1105.00" y="115.60" font-size="13.40" fill="#dadada" text-anchor="middle" textLength="83.00" lengthAdjust="spacingAndGlyphs" stroke="#dadada" stroke-width="0.3">RGB Balance</text>
<rect x="1056.8" y="120.5" width="126.9" height="323.8" fill="#242424"/>
<line x1="1056.8" y1="122.4" x2="1183.7" y2="122.4" stroke="#8e8e8e" stroke-width="1.3"/>
<line x1="1056.8" y1="202.4" x2="1183.7" y2="202.4" stroke="#8e8e8e" stroke-width="1.3"/>
<line x1="1056.8" y1="283.6" x2="1183.7" y2="283.6" stroke="#8e8e8e" stroke-width="1.3"/>
<line x1="1056.8" y1="364.0" x2="1183.7" y2="364.0" stroke="#8e8e8e" stroke-width="1.3"/>
<rect x="1069.2" y="363.0" width="31.8" height="81.3" fill="url(#gr)" stroke="#000" stroke-width="1.5"/>
<rect x="1103.6" y="272.4" width="31.9" height="171.9" fill="url(#gg)" stroke="#000" stroke-width="1.5"/>
<rect x="1137.8" y="175.8" width="31.5" height="268.5" fill="url(#gb)" stroke="#000" stroke-width="1.5"/>
<rect x="1056.8" y="120.5" width="126.9" height="323.8" fill="none" stroke="#9c9c9c" stroke-width="1.5"/>
<line x1="1049.8" y1="121.9" x2="1056.8" y2="121.9" stroke="#dcdcdc" stroke-width="1.3"/>
<text x="1049.80" y="127.10" font-size="14.20" fill="#dadada" text-anchor="end" textLength="23.31" lengthAdjust="spacingAndGlyphs" stroke="#dadada" stroke-width="0.3">110</text>
<line x1="1049.8" y1="202.4" x2="1056.8" y2="202.4" stroke="#dcdcdc" stroke-width="1.3"/>
<text x="1049.80" y="207.60" font-size="14.20" fill="#dadada" text-anchor="end" textLength="24.40" lengthAdjust="spacingAndGlyphs" stroke="#dadada" stroke-width="0.3">105</text>
<line x1="1049.8" y1="283.6" x2="1056.8" y2="283.6" stroke="#dcdcdc" stroke-width="1.3"/>
<text x="1049.80" y="288.80" font-size="14.20" fill="#dadada" text-anchor="end" textLength="24.40" lengthAdjust="spacingAndGlyphs" stroke="#dadada" stroke-width="0.3">100</text>
<line x1="1049.8" y1="364.0" x2="1056.8" y2="364.0" stroke="#dcdcdc" stroke-width="1.3"/>
<text x="1049.80" y="369.20" font-size="14.20" fill="#dadada" text-anchor="end" textLength="16.27" lengthAdjust="spacingAndGlyphs" stroke="#dadada" stroke-width="0.3">95</text>
<line x1="1049.8" y1="444.3" x2="1056.8" y2="444.3" stroke="#dcdcdc" stroke-width="1.3"/>
<text x="1049.80" y="449.50" font-size="14.20" fill="#dadada" text-anchor="end" textLength="16.27" lengthAdjust="spacingAndGlyphs" stroke="#dadada" stroke-width="0.3">90</text>
<line x1="1056.8" y1="444.3" x2="1056.8" y2="449.8" stroke="#dcdcdc" stroke-width="1.3"/>
<line x1="1183.7" y1="444.3" x2="1183.7" y2="449.8" stroke="#dcdcdc" stroke-width="1.3"/>
<text x="1120.00" y="462.00" font-size="14.20" fill="#dadada" text-anchor="middle" textLength="24.40" lengthAdjust="spacingAndGlyphs" stroke="#dadada" stroke-width="0.3">100</text>
</g>
<g id="chart-gamma">
<text x="1428.50" y="115.60" font-size="13.40" fill="#dadada" text-anchor="middle" textLength="109.00" lengthAdjust="spacingAndGlyphs" stroke="#dadada" stroke-width="0.3">Gamma Log/Log</text>
<rect x="1242.9" y="120.5" width="396.9" height="318.5" fill="#242424"/>
<line x1="1242.9" y1="122.4" x2="1639.8" y2="122.4" stroke="#8e8e8e" stroke-width="1.3"/>
<line x1="1242.9" y1="186.0" x2="1639.8" y2="186.0" stroke="#8e8e8e" stroke-width="1.3"/>
<line x1="1242.9" y1="248.2" x2="1639.8" y2="248.2" stroke="#8e8e8e" stroke-width="1.3"/>
<line x1="1242.9" y1="312.2" x2="1639.8" y2="312.2" stroke="#8e8e8e" stroke-width="1.3"/>
<line x1="1242.9" y1="375.8" x2="1639.8" y2="375.8" stroke="#8e8e8e" stroke-width="1.3"/>
<g clip-path="url(#cg)">
<path d="M1242.90 603.80L1262.75 332.80L1282.59 307.00L1302.44 297.50L1322.28 302.20L1342.12 304.40L1361.97 294.10L1381.82 291.20L1401.66 291.20L1421.51 298.60L1441.35 303.00L1461.19 307.00L1481.04 308.10L1500.88 308.10L1520.73 303.30L1540.58 288.30L1560.42 289.70L1580.26 308.50L1600.11 308.50L1619.95 257.40L1639.80 286.80" fill="none" stroke="#9a9a9a" stroke-width="2.7" stroke-linejoin="round"/>
<path d="M1254.99 450.28C1255.33 448.28 1256.35 441.82 1256.99 438.28C1257.63 434.75 1258.04 432.40 1258.83 429.09C1259.63 425.78 1260.67 422.11 1261.77 418.43C1262.88 414.75 1264.10 410.77 1265.45 407.03C1266.80 403.29 1268.21 399.86 1269.86 396.00C1271.52 392.14 1273.42 387.54 1275.38 383.86C1277.34 380.19 1278.99 377.86 1281.63 373.94C1284.26 370.01 1287.88 364.32 1291.19 360.33C1294.50 356.35 1298.18 353.10 1301.49 350.04C1304.79 346.97 1307.74 344.40 1311.05 341.95C1314.35 339.50 1316.32 337.96 1321.34 335.33C1326.37 332.69 1334.58 328.77 1341.20 326.14C1347.82 323.50 1354.43 321.54 1361.05 319.52C1367.67 317.49 1374.29 315.66 1380.91 314.00C1387.53 312.35 1394.15 310.94 1400.76 309.59C1407.38 308.24 1414.00 307.08 1420.62 305.91C1427.24 304.75 1433.86 303.58 1440.48 302.60C1447.09 301.62 1453.71 300.83 1460.33 300.03C1466.95 299.23 1473.57 298.50 1480.19 297.82C1486.81 297.15 1493.42 296.60 1500.04 295.98C1506.66 295.37 1513.28 294.70 1519.90 294.15C1526.52 293.59 1533.14 293.17 1539.75 292.67C1546.37 292.18 1552.87 291.63 1559.61 291.20C1566.35 290.78 1573.46 290.47 1580.20 290.10C1586.94 289.73 1593.44 289.30 1600.06 289.00C1606.68 288.69 1613.29 288.51 1619.91 288.26C1626.53 288.02 1636.46 287.65 1639.77 287.53" fill="none" stroke="#f4f400" stroke-width="2.9" stroke-linejoin="round"/>
</g>
<rect x="1242.9" y="120.5" width="396.9" height="318.5" fill="none" stroke="#9c9c9c" stroke-width="1.5"/>
<line x1="1236.3" y1="121.9" x2="1242.9" y2="121.9" stroke="#dcdcdc" stroke-width="1.3"/>
<text x="1236.30" y="127.10" font-size="14.20" fill="#dadada" text-anchor="end" textLength="20.33" lengthAdjust="spacingAndGlyphs" stroke="#dadada" stroke-width="0.3">2,8</text>
<line x1="1236.3" y1="186.0" x2="1242.9" y2="186.0" stroke="#dcdcdc" stroke-width="1.3"/>
<text x="1236.30" y="191.20" font-size="14.20" fill="#dadada" text-anchor="end" textLength="20.33" lengthAdjust="spacingAndGlyphs" stroke="#dadada" stroke-width="0.3">2,6</text>
<line x1="1236.3" y1="248.2" x2="1242.9" y2="248.2" stroke="#dcdcdc" stroke-width="1.3"/>
<text x="1236.30" y="253.40" font-size="14.20" fill="#dadada" text-anchor="end" textLength="20.33" lengthAdjust="spacingAndGlyphs" stroke="#dadada" stroke-width="0.3">2,4</text>
<line x1="1236.3" y1="312.2" x2="1242.9" y2="312.2" stroke="#dcdcdc" stroke-width="1.3"/>
<text x="1236.30" y="317.40" font-size="14.20" fill="#dadada" text-anchor="end" textLength="20.33" lengthAdjust="spacingAndGlyphs" stroke="#dadada" stroke-width="0.3">2,2</text>
<line x1="1236.3" y1="375.8" x2="1242.9" y2="375.8" stroke="#dcdcdc" stroke-width="1.3"/>
<text x="1236.30" y="381.00" font-size="14.20" fill="#dadada" text-anchor="end" stroke="#dadada" stroke-width="0.3">2</text>
<line x1="1236.3" y1="439.0" x2="1242.9" y2="439.0" stroke="#dcdcdc" stroke-width="1.3"/>
<text x="1236.30" y="444.20" font-size="14.20" fill="#dadada" text-anchor="end" textLength="20.33" lengthAdjust="spacingAndGlyphs" stroke="#dadada" stroke-width="0.3">1,8</text>
<line x1="1242.9" y1="439.0" x2="1242.9" y2="444.5" stroke="#dcdcdc" stroke-width="1.3"/>
<text x="1242.40" y="460.80" font-size="14.20" fill="#dadada" text-anchor="middle" stroke="#dadada" stroke-width="0.3">0</text>
<line x1="1322.3" y1="439.0" x2="1322.3" y2="444.5" stroke="#dcdcdc" stroke-width="1.3"/>
<text x="1321.78" y="460.80" font-size="14.20" fill="#dadada" text-anchor="middle" textLength="16.27" lengthAdjust="spacingAndGlyphs" stroke="#dadada" stroke-width="0.3">20</text>
<line x1="1401.7" y1="439.0" x2="1401.7" y2="444.5" stroke="#dcdcdc" stroke-width="1.3"/>
<text x="1401.16" y="460.80" font-size="14.20" fill="#dadada" text-anchor="middle" textLength="16.27" lengthAdjust="spacingAndGlyphs" stroke="#dadada" stroke-width="0.3">40</text>
<line x1="1481.0" y1="439.0" x2="1481.0" y2="444.5" stroke="#dcdcdc" stroke-width="1.3"/>
<text x="1480.54" y="460.80" font-size="14.20" fill="#dadada" text-anchor="middle" textLength="16.27" lengthAdjust="spacingAndGlyphs" stroke="#dadada" stroke-width="0.3">60</text>
<line x1="1560.4" y1="439.0" x2="1560.4" y2="444.5" stroke="#dcdcdc" stroke-width="1.3"/>
<text x="1559.92" y="460.80" font-size="14.20" fill="#dadada" text-anchor="middle" textLength="16.27" lengthAdjust="spacingAndGlyphs" stroke="#dadada" stroke-width="0.3">80</text>
<line x1="1639.8" y1="439.0" x2="1639.8" y2="444.5" stroke="#dcdcdc" stroke-width="1.3"/>
<text x="1639.30" y="460.80" font-size="14.20" fill="#dadada" text-anchor="middle" textLength="24.40" lengthAdjust="spacingAndGlyphs" stroke="#dadada" stroke-width="0.3">100</text>
</g>
</svg>
<div id="metrics">
<p class="abs" style="left:0;top:0"><span class="t" style="left:85.40px;top:477.34px;font-size:28.30px;color:#f2f2f2;transform:scaleX(0.9671);transform-origin:0 0;">Avg</span><span class="t" style="left:143.00px;top:477.34px;font-size:28.30px;color:#f2f2f2;transform:scaleX(1.0184);transform-origin:0 0;">dE2000:</span><span class="t" style="left:260.80px;top:477.34px;font-size:28.30px;color:#f2f2f2;transform:scaleX(1.0067);transform-origin:0 0;">5,5</span></p>
<p class="abs" style="left:0;top:0"><span class="t" style="left:497.00px;top:477.34px;font-size:28.30px;color:#f2f2f2;transform:scaleX(0.9506);transform-origin:0 0;">Avg</span><span class="t" style="left:553.80px;top:477.34px;font-size:28.30px;color:#f2f2f2;transform:scaleX(0.9057);transform-origin:0 0;">CCT:</span><span class="t" style="left:621.00px;top:477.34px;font-size:28.30px;color:#f2f2f2;transform:scaleX(1.0394);transform-origin:0 0;">7958</span></p>
<p class="abs" style="left:0;top:0"><span class="t" style="left:872.00px;top:477.34px;font-size:28.30px;color:#f2f2f2;transform:scaleX(1.0498);transform-origin:0 0;">Contrast</span><span class="t" style="left:995.40px;top:477.34px;font-size:28.30px;color:#f2f2f2;transform:scaleX(1.0222);transform-origin:0 0;">Ratio:</span><span class="t" style="left:1082.00px;top:477.34px;font-size:28.30px;color:#f2f2f2;transform:scaleX(1.0235);transform-origin:0 0;">1599</span></p>
<p class="abs" style="left:0;top:0"><span class="t" style="left:1272.00px;top:477.34px;font-size:28.30px;color:#f2f2f2;transform:scaleX(1.0020);transform-origin:0 0;">Average</span><span class="t" style="left:1388.30px;top:477.34px;font-size:28.30px;color:#f2f2f2;transform:scaleX(1.0444);transform-origin:0 0;">Gamma:</span><span class="t" style="left:1511.70px;top:477.34px;font-size:28.30px;color:#f2f2f2;transform:scaleX(1.0473);transform-origin:0 0;">2,234</span></p>
</div>
<div id="swatches" class="abs" style="left:0;top:521.8px;width:1667px;height:131px;background:#000"></div>
<div class="abs" style="left:94px;top:522px;width:1px;height:130.5px;background:#262626"></div>
<div class="abs" style="left:1653px;top:522px;width:1px;height:130.5px;background:#1c1c1c"></div>
<span class="t" style="left:103.0px;top:550.3px;width:60px;height:14px;margin-left:-30px;margin-top:-7px;text-align:center;font-size:12.6px;font-weight:700;color:#f4f4f4;transform:rotate(-90deg) scaleX(0.92);line-height:14px">Actual</span>
<span class="t" style="left:103.0px;top:607.7px;width:60px;height:14px;margin-left:-30px;margin-top:-7px;text-align:center;font-size:12.6px;font-weight:700;color:#f4f4f4;transform:rotate(-90deg) scaleX(0.92);line-height:14px">Target</span>
<div class="abs" style="left:112.10px;top:528.2px;width:63px;height:101.6px;border:1px solid #f2f2f2;background:linear-gradient(rgb(0,0,0) 0,rgb(0,0,0) 50.4%,rgb(0,0,0) 50.4%);box-shadow:inset 0 0 0 1px rgba(128,128,128,0.35)"></div>
<span class="t" style="left:140.03px;top:632.83px;font-size:13.20px;color:#f2f2f2;">0</span>
<div class="abs" style="left:185.70px;top:528.2px;width:63px;height:101.6px;border:1px solid #f2f2f2;background:linear-gradient(rgb(6,8,9) 0,rgb(6,8,9) 50.4%,rgb(12,12,12) 50.4%);box-shadow:inset 0 0 0 1px rgba(128,128,128,0.35)"></div>
<span class="t" style="left:213.63px;top:632.83px;font-size:13.20px;color:#f2f2f2;">5</span>
<div class="abs" style="left:259.31px;top:528.2px;width:63px;height:101.6px;border:1px solid #f2f2f2;background:linear-gradient(rgb(19,21,23) 0,rgb(19,21,23) 50.4%,rgb(25,25,25) 50.4%);box-shadow:inset 0 0 0 1px rgba(128,128,128,0.35)"></div>
<span class="t" style="left:283.57px;top:632.83px;font-size:13.20px;color:#f2f2f2;">10</span>
<div class="abs" style="left:332.91px;top:528.2px;width:63px;height:101.6px;border:1px solid #f2f2f2;background:linear-gradient(rgb(28,32,35) 0,rgb(28,32,35) 50.4%,rgb(38,38,38) 50.4%);box-shadow:inset 0 0 0 1px rgba(128,128,128,0.35)"></div>
<span class="t" style="left:357.17px;top:632.83px;font-size:13.20px;color:#f2f2f2;">15</span>
<div class="abs" style="left:406.52px;top:528.2px;width:63px;height:101.6px;border:1px solid #f2f2f2;background:linear-gradient(rgb(41,45,50) 0,rgb(41,45,50) 50.4%,rgb(51,51,51) 50.4%);box-shadow:inset 0 0 0 1px rgba(128,128,128,0.35)"></div>
<span class="t" style="left:430.78px;top:632.83px;font-size:13.20px;color:#f2f2f2;">20</span>
<div class="abs" style="left:480.12px;top:528.2px;width:63px;height:101.6px;border:1px solid #f2f2f2;background:linear-gradient(rgb(56,60,66) 0,rgb(56,60,66) 50.4%,rgb(63,63,63) 50.4%);box-shadow:inset 0 0 0 1px rgba(128,128,128,0.35)"></div>
<span class="t" style="left:504.38px;top:632.83px;font-size:13.20px;color:#f2f2f2;">25</span>
<div class="abs" style="left:553.73px;top:528.2px;width:63px;height:101.6px;border:1px solid #f2f2f2;background:linear-gradient(rgb(68,73,79) 0,rgb(68,73,79) 50.4%,rgb(76,76,76) 50.4%);box-shadow:inset 0 0 0 1px rgba(128,128,128,0.35)"></div>
<span class="t" style="left:577.99px;top:632.83px;font-size:13.20px;color:#f2f2f2;">30</span>
<div class="abs" style="left:627.34px;top:528.2px;width:63px;height:101.6px;border:1px solid #f2f2f2;background:linear-gradient(rgb(84,89,96) 0,rgb(84,89,96) 50.4%,rgb(89,89,89) 50.4%);box-shadow:inset 0 0 0 1px rgba(128,128,128,0.35)"></div>
<span class="t" style="left:651.59px;top:632.83px;font-size:13.20px;color:#f2f2f2;">35</span>
<div class="abs" style="left:700.94px;top:528.2px;width:63px;height:101.6px;border:1px solid #f2f2f2;background:linear-gradient(rgb(96,102,110) 0,rgb(96,102,110) 50.4%,rgb(102,102,102) 50.4%);box-shadow:inset 0 0 0 1px rgba(128,128,128,0.35)"></div>
<span class="t" style="left:725.20px;top:632.83px;font-size:13.20px;color:#f2f2f2;">40</span>
<div class="abs" style="left:774.55px;top:528.2px;width:63px;height:101.6px;border:1px solid #f2f2f2;background:linear-gradient(rgb(108,115,124) 0,rgb(108,115,124) 50.4%,rgb(114,114,114) 50.4%);box-shadow:inset 0 0 0 1px rgba(128,128,128,0.35)"></div>
<span class="t" style="left:798.80px;top:632.83px;font-size:13.20px;color:#f2f2f2;">45</span>
<div class="abs" style="left:848.15px;top:528.2px;width:63px;height:101.6px;border:1px solid #f2f2f2;background:linear-gradient(rgb(120,128,137) 0,rgb(120,128,137) 50.4%,rgb(127,127,127) 50.4%);box-shadow:inset 0 0 0 1px rgba(128,128,128,0.35)"></div>
<span class="t" style="left:872.41px;top:632.83px;font-size:13.20px;color:#f2f2f2;">50</span>
<div class="abs" style="left:921.76px;top:528.2px;width:63px;height:101.6px;border:1px solid #f2f2f2;background:linear-gradient(rgb(132,140,151) 0,rgb(132,140,151) 50.4%,rgb(140,140,140) 50.4%);box-shadow:inset 0 0 0 1px rgba(128,128,128,0.35)"></div>
<span class="t" style="left:946.01px;top:632.83px;font-size:13.20px;color:#f2f2f2;">55</span>
<div class="abs" style="left:995.36px;top:528.2px;width:63px;height:101.6px;border:1px solid #f2f2f2;background:linear-gradient(rgb(144,153,165) 0,rgb(144,153,165) 50.4%,rgb(153,153,153) 50.4%);box-shadow:inset 0 0 0 1px rgba(128,128,128,0.35)"></div>
<span class="t" style="left:1019.62px;top:632.83px;font-size:13.20px;color:#f2f2f2;">60</span>
<div class="abs" style="left:1068.96px;top:528.2px;width:63px;height:101.6px;border:1px solid #f2f2f2;background:linear-gradient(rgb(156,166,179) 0,rgb(156,166,179) 50.4%,rgb(165,165,165) 50.4%);box-shadow:inset 0 0 0 1px rgba(128,128,128,0.35)"></div>
<span class="t" style="left:1093.22px;top:632.83px;font-size:13.20px;color:#f2f2f2;">65</span>
<div class="abs" style="left:1142.57px;top:528.2px;width:63px;height:101.6px;border:1px solid #f2f2f2;background:linear-gradient(rgb(168,179,193) 0,rgb(168,179,193) 50.4%,rgb(178,178,178) 50.4%);box-shadow:inset 0 0 0 1px rgba(128,128,128,0.35)"></div>
<span class="t" style="left:1166.83px;top:632.83px;font-size:13.20px;color:#f2f2f2;">70</span>
<div class="abs" style="left:1216.17px;top:528.2px;width:63px;height:101.6px;border:1px solid #f2f2f2;background:linear-gradient(rgb(180,192,206) 0,rgb(180,192,206) 50.4%,rgb(191,191,191) 50.4%);box-shadow:inset 0 0 0 1px rgba(128,128,128,0.35)"></div>
<span class="t" style="left:1240.43px;top:632.83px;font-size:13.20px;color:#f2f2f2;">75</span>
<div class="abs" style="left:1289.78px;top:528.2px;width:63px;height:101.6px;border:1px solid #f2f2f2;background:linear-gradient(rgb(192,205,220) 0,rgb(192,205,220) 50.4%,rgb(204,204,204) 50.4%);box-shadow:inset 0 0 0 1px rgba(128,128,128,0.35)"></div>
<span class="t" style="left:1314.04px;top:632.83px;font-size:13.20px;color:#f2f2f2;">80</span>
<div class="abs" style="left:1363.38px;top:528.2px;width:63px;height:101.6px;border:1px solid #f2f2f2;background:linear-gradient(rgb(204,217,234) 0,rgb(204,217,234) 50.4%,rgb(216,216,216) 50.4%);box-shadow:inset 0 0 0 1px rgba(128,128,128,0.35)"></div>
<span class="t" style="left:1387.64px;top:632.83px;font-size:13.20px;color:#f2f2f2;">85</span>
<div class="abs" style="left:1436.99px;top:528.2px;width:63px;height:101.6px;border:1px solid #f2f2f2;background:linear-gradient(rgb(216,230,248) 0,rgb(216,230,248) 50.4%,rgb(229,229,229) 50.4%);box-shadow:inset 0 0 0 1px rgba(128,128,128,0.35)"></div>
<span class="t" style="left:1461.25px;top:632.83px;font-size:13.20px;color:#f2f2f2;">90</span>
<div class="abs" style="left:1510.60px;top:528.2px;width:63px;height:101.6px;border:1px solid #f2f2f2;background:linear-gradient(rgb(221,235,253) 0,rgb(221,235,253) 50.4%,rgb(234,234,234) 50.4%);box-shadow:inset 0 0 0 1px rgba(128,128,128,0.35)"></div>
<span class="t" style="left:1534.85px;top:632.83px;font-size:13.20px;color:#f2f2f2;">95</span>
<div class="abs" style="left:1584.20px;top:528.2px;width:63px;height:101.6px;border:1px solid #f2f2f2;background:linear-gradient(rgb(222,236,254) 0,rgb(222,236,254) 50.4%,rgb(235,235,235) 50.4%);box-shadow:inset 0 0 0 1px rgba(128,128,128,0.35)"></div>
<span class="t" style="left:1604.79px;top:632.83px;font-size:13.20px;color:#f2f2f2;">100</span>
<div id="reading">
<h2 class="abs" style="left:0;top:0;font-weight:400"><span class="t" style="left:20.30px;top:696.18px;font-size:27.20px;color:#f2f2f2;transform:scaleX(1.1162);transform-origin:0 0;">Current</span><span class="t" style="left:132.80px;top:696.18px;font-size:27.20px;color:#f2f2f2;transform:scaleX(1.0456);transform-origin:0 0;">Reading</span></h2>
<p class="abs" style="left:0;top:0"><span class="t" style="left:20.30px;top:741.35px;font-size:23.80px;color:#f2f2f2;transform:scaleX(0.9211);transform-origin:0 0;">x:</span><span class="t" style="left:46.10px;top:741.35px;font-size:23.80px;color:#f2f2f2;transform:scaleX(1.0381);transform-origin:0 0;">0,2933</span><span class="t" style="left:170.00px;top:741.35px;font-size:23.80px;color:#f2f2f2;transform:scaleX(0.9642);transform-origin:0 0;">y:</span><span class="t" style="left:196.80px;top:741.35px;font-size:23.80px;color:#f2f2f2;transform:scaleX(1.0326);transform-origin:0 0;">0,3123</span></p>
<p class="abs" style="left:0;top:0"><span class="t" style="left:20.30px;top:775.55px;font-size:23.80px;color:#f2f2f2;transform:scaleX(1.0628);transform-origin:0 0;">u':</span><span class="t" style="left:54.70px;top:775.55px;font-size:23.80px;color:#f2f2f2;transform:scaleX(1.0422);transform-origin:0 0;">0,1905</span><span class="t" style="left:170.60px;top:775.55px;font-size:23.80px;color:#f2f2f2;transform:scaleX(1.0049);transform-origin:0 0;">v':</span><span class="t" style="left:202.80px;top:775.55px;font-size:23.80px;color:#f2f2f2;transform:scaleX(1.0312);transform-origin:0 0;">0,4562</span></p>
<p class="abs" style="left:0;top:0"><span class="t" style="left:20.30px;top:809.45px;font-size:23.80px;color:#f2f2f2;transform:scaleX(1.1351);transform-origin:0 0;">cd/m²:</span><span class="t" style="left:102.40px;top:809.45px;font-size:23.80px;color:#f2f2f2;transform:scaleX(1.0580);transform-origin:0 0;">461,1406</span></p>
<p class="abs" style="left:0;top:0"><span class="t" style="left:20.30px;top:843.25px;font-size:23.80px;color:#f2f2f2;transform:scaleX(0.8591);transform-origin:0 0;">ΔE</span><span class="t" style="left:56.30px;top:843.25px;font-size:23.80px;color:#f2f2f2;transform:scaleX(1.0420);transform-origin:0 0;">2000:</span><span class="t" style="left:126.20px;top:843.25px;font-size:23.80px;color:#f2f2f2;transform:scaleX(1.0213);transform-origin:0 0;">8,52</span></p>
</div>
<svg id="chart-cie" style="left:320px;top:665px" width="320" height="230" viewBox="320 665 320 230">
<defs>
<linearGradient id="cr0" x1="0" x2="1" y1="0" y2="0"><stop offset="0.0000" stop-color="#75ffc9"/><stop offset="0.0833" stop-color="#82ffc9"/><stop offset="0.1667" stop-color="#90ffc8"/><stop offset="0.2500" stop-color="#9effc7"/><stop offset="0.3333" stop-color="#acffc7"/><stop offset="0.4167" stop-color="#bbffc6"/><stop offset="0.5000" stop-color="#caffc5"/><stop offset="0.5833" stop-color="#d9ffc4"/><stop offset="0.6667" stop-color="#e9ffc4"/><stop offset="0.7500" stop-color="#f9ffc3"/><stop offset="0.8333" stop-color="#fff4ba"/><stop offset="0.9167" stop-color="#ffe5ae"/><stop offset="1.0000" stop-color="#ffd8a3"/></linearGradient><linearGradient id="cr1" x1="0" x2="1" y1="0" y2="0"><stop offset="0.0000" stop-color="#77ffcc"/><stop offset="0.0833" stop-color="#84ffcb"/><stop offset="0.1667" stop-color="#92ffca"/><stop offset="0.2500" stop-color="#a0ffca"/><stop offset="0.3333" stop-color="#aeffc9"/><stop offset="0.4167" stop-color="#bdffc8"/><stop offset="0.5000" stop-color="#ccffc8"/><stop offset="0.5833" stop-color="#dcffc7"/><stop offset="0.6667" stop-color="#ecffc6"/><stop offset="0.7500" stop-color="#fcffc5"/><stop offset="0.8333" stop-color="#fff2ba"/><stop offset="0.9167" stop-color="#ffe3ae"/><stop offset="1.0000" stop-color="#ffd5a3"/></linearGradient><linearGradient id="cr2" x1="0" x2="1" y1="0" y2="0"><stop offset="0.0000" stop-color="#78ffce"/><stop offset="0.0833" stop-color="#86ffce"/><stop offset="0.1667" stop-color="#94ffcd"/><stop offset="0.2500" stop-color="#a2ffcc"/><stop offset="0.3333" stop-color="#b0ffcc"/><stop offset="0.4167" stop-color="#bfffcb"/><stop offset="0.5000" stop-color="#cfffca"/><stop offset="0.5833" stop-color="#deffca"/><stop offset="0.6667" stop-color="#efffc9"/><stop offset="0.7500" stop-color="#ffffc8"/><stop offset="0.8333" stop-color="#ffefbb"/><stop offset="0.9167" stop-color="#ffe0af"/><stop offset="1.0000" stop-color="#ffd3a4"/></linearGradient><linearGradient id="cr3" x1="0" x2="1" y1="0" y2="0"><stop offset="0.0000" stop-color="#7affd1"/><stop offset="0.0833" stop-color="#88ffd0"/><stop offset="0.1667" stop-color="#96ffd0"/><stop offset="0.2500" stop-color="#a4ffcf"/><stop offset="0.3333" stop-color="#b3ffce"/><stop offset="0.4167" stop-color="#c2ffce"/><stop offset="0.5000" stop-color="#d1ffcd"/><stop offset="0.5833" stop-color="#e1ffcc"/><stop offset="0.6667" stop-color="#f1ffcc"/><stop offset="0.7500" stop-color="#fffcc9"/><stop offset="0.8333" stop-color="#ffecbb"/><stop offset="0.9167" stop-color="#ffdeaf"/><stop offset="1.0000" stop-color="#ffd1a4"/></linearGradient><linearGradient id="cr4" x1="0" x2="1" y1="0" y2="0"><stop offset="0.0000" stop-color="#7cffd3"/><stop offset="0.0833" stop-color="#8affd3"/><stop offset="0.1667" stop-color="#98ffd2"/><stop offset="0.2500" stop-color="#a6ffd2"/><stop offset="0.3333" stop-color="#b5ffd1"/><stop offset="0.4167" stop-color="#c4ffd0"/><stop offset="0.5000" stop-color="#d4ffd0"/><stop offset="0.5833" stop-color="#e4ffcf"/><stop offset="0.6667" stop-color="#f4ffcf"/><stop offset="0.7500" stop-color="#fff9c9"/><stop offset="0.8333" stop-color="#ffe9bc"/><stop offset="0.9167" stop-color="#ffdbb0"/><stop offset="1.0000" stop-color="#ffcea5"/></linearGradient><linearGradient id="cr5" x1="0" x2="1" y1="0" y2="0"><stop offset="0.0000" stop-color="#7effd6"/><stop offset="0.0833" stop-color="#8cffd5"/><stop offset="0.1667" stop-color="#9affd5"/><stop offset="0.2500" stop-color="#a8ffd4"/><stop offset="0.3333" stop-color="#b7ffd4"/><stop offset="0.4167" stop-color="#c7ffd3"/><stop offset="0.5000" stop-color="#d6ffd3"/><stop offset="0.5833" stop-color="#e7ffd2"/><stop offset="0.6667" stop-color="#f7ffd1"/><stop offset="0.7500" stop-color="#fff6c9"/><stop offset="0.8333" stop-color="#ffe7bc"/><stop offset="0.9167" stop-color="#ffd9b0"/><stop offset="1.0000" stop-color="#ffcca5"/></linearGradient><linearGradient id="cr6" x1="0" x2="1" y1="0" y2="0"><stop offset="0.0000" stop-color="#80ffd9"/><stop offset="0.0833" stop-color="#8dffd8"/><stop offset="0.1667" stop-color="#9cffd8"/><stop offset="0.2500" stop-color="#aaffd7"/><stop offset="0.3333" stop-color="#baffd7"/><stop offset="0.4167" stop-color="#c9ffd6"/><stop offset="0.5000" stop-color="#d9ffd6"/><stop offset="0.5833" stop-color="#e9ffd5"/><stop offset="0.6667" stop-color="#faffd4"/><stop offset="0.7500" stop-color="#fff3ca"/><stop offset="0.8333" stop-color="#ffe4bd"/><stop offset="0.9167" stop-color="#ffd6b1"/><stop offset="1.0000" stop-color="#ffcaa6"/></linearGradient><linearGradient id="cr7" x1="0" x2="1" y1="0" y2="0"><stop offset="0.0000" stop-color="#81ffdb"/><stop offset="0.0833" stop-color="#8fffdb"/><stop offset="0.1667" stop-color="#9effda"/><stop offset="0.2500" stop-color="#adffda"/><stop offset="0.3333" stop-color="#bcffd9"/><stop offset="0.4167" stop-color="#ccffd9"/><stop offset="0.5000" stop-color="#dcffd8"/><stop offset="0.5833" stop-color="#ecffd8"/><stop offset="0.6667" stop-color="#fdffd7"/><stop offset="0.7500" stop-color="#fff0ca"/><stop offset="0.8333" stop-color="#ffe1bd"/><stop offset="0.9167" stop-color="#ffd4b1"/><stop offset="1.0000" stop-color="#ffc7a6"/></linearGradient><linearGradient id="cr8" x1="0" x2="1" y1="0" y2="0"><stop offset="0.0000" stop-color="#83ffde"/><stop offset="0.0833" stop-color="#91ffde"/><stop offset="0.1667" stop-color="#a0ffdd"/><stop offset="0.2500" stop-color="#afffdd"/><stop offset="0.3333" stop-color="#beffdc"/><stop offset="0.4167" stop-color="#ceffdc"/><stop offset="0.5000" stop-color="#deffdb"/><stop offset="0.5833" stop-color="#efffdb"/><stop offset="0.6667" stop-color="#fffed9"/><stop offset="0.7500" stop-color="#ffedcb"/><stop offset="0.8333" stop-color="#ffdfbe"/><stop offset="0.9167" stop-color="#ffd1b2"/><stop offset="1.0000" stop-color="#ffc5a7"/></linearGradient><linearGradient id="cr9" x1="0" x2="1" y1="0" y2="0"><stop offset="0.0000" stop-color="#85ffe1"/><stop offset="0.0833" stop-color="#94ffe0"/><stop offset="0.1667" stop-color="#a2ffe0"/><stop offset="0.2500" stop-color="#b1ffe0"/><stop offset="0.3333" stop-color="#c1ffdf"/><stop offset="0.4167" stop-color="#d1ffdf"/><stop offset="0.5000" stop-color="#e1ffde"/><stop offset="0.5833" stop-color="#f2ffde"/><stop offset="0.6667" stop-color="#fffbda"/><stop offset="0.7500" stop-color="#ffebcb"/><stop offset="0.8333" stop-color="#ffdcbe"/><stop offset="0.9167" stop-color="#ffcfb2"/><stop offset="1.0000" stop-color="#ffc3a7"/></linearGradient><linearGradient id="cr10" x1="0" x2="1" y1="0" y2="0"><stop offset="0.0000" stop-color="#87ffe3"/><stop offset="0.0833" stop-color="#96ffe3"/><stop offset="0.1667" stop-color="#a4ffe3"/><stop offset="0.2500" stop-color="#b4ffe2"/><stop offset="0.3333" stop-color="#c3ffe2"/><stop offset="0.4167" stop-color="#d3ffe2"/><stop offset="0.5000" stop-color="#e4ffe1"/><stop offset="0.5833" stop-color="#f5ffe1"/><stop offset="0.6667" stop-color="#fff8da"/><stop offset="0.7500" stop-color="#ffe8cc"/><stop offset="0.8333" stop-color="#ffd9bf"/><stop offset="0.9167" stop-color="#ffccb3"/><stop offset="1.0000" stop-color="#ffc0a8"/></linearGradient><linearGradient id="cr11" x1="0" x2="1" y1="0" y2="0"><stop offset="0.0000" stop-color="#89ffe6"/><stop offset="0.0833" stop-color="#98ffe6"/><stop offset="0.1667" stop-color="#a7ffe6"/><stop offset="0.2500" stop-color="#b6ffe5"/><stop offset="0.3333" stop-color="#c6ffe5"/><stop offset="0.4167" stop-color="#d6ffe5"/><stop offset="0.5000" stop-color="#e7ffe4"/><stop offset="0.5833" stop-color="#f8ffe4"/><stop offset="0.6667" stop-color="#fff5db"/><stop offset="0.7500" stop-color="#ffe5cc"/><stop offset="0.8333" stop-color="#ffd7bf"/><stop offset="0.9167" stop-color="#ffcab3"/><stop offset="1.0000" stop-color="#ffbea8"/></linearGradient><linearGradient id="cr12" x1="0" x2="1" y1="0" y2="0"><stop offset="0.0000" stop-color="#8bffe9"/><stop offset="0.0833" stop-color="#9affe9"/><stop offset="0.1667" stop-color="#a9ffe9"/><stop offset="0.2500" stop-color="#b8ffe8"/><stop offset="0.3333" stop-color="#c8ffe8"/><stop offset="0.4167" stop-color="#d9ffe8"/><stop offset="0.5000" stop-color="#eaffe8"/><stop offset="0.5833" stop-color="#fbffe7"/><stop offset="0.6667" stop-color="#fff2db"/><stop offset="0.7500" stop-color="#ffe2cd"/><stop offset="0.8333" stop-color="#ffd4c0"/><stop offset="0.9167" stop-color="#ffc7b4"/><stop offset="1.0000" stop-color="#ffbca9"/></linearGradient><linearGradient id="cr13" x1="0" x2="1" y1="0" y2="0"><stop offset="0.0000" stop-color="#8dffec"/><stop offset="0.0833" stop-color="#9cffec"/><stop offset="0.1667" stop-color="#abffec"/><stop offset="0.2500" stop-color="#bbffeb"/><stop offset="0.3333" stop-color="#cbffeb"/><stop offset="0.4167" stop-color="#dcffeb"/><stop offset="0.5000" stop-color="#edffeb"/><stop offset="0.5833" stop-color="#feffea"/><stop offset="0.6667" stop-color="#ffefdb"/><stop offset="0.7500" stop-color="#ffe0cd"/><stop offset="0.8333" stop-color="#ffd2c0"/><stop offset="0.9167" stop-color="#ffc5b4"/><stop offset="1.0000" stop-color="#ffbaa9"/></linearGradient><linearGradient id="cr14" x1="0" x2="1" y1="0" y2="0"><stop offset="0.0000" stop-color="#8fffef"/><stop offset="0.0833" stop-color="#9effef"/><stop offset="0.1667" stop-color="#aeffef"/><stop offset="0.2500" stop-color="#bdffef"/><stop offset="0.3333" stop-color="#ceffee"/><stop offset="0.4167" stop-color="#deffee"/><stop offset="0.5000" stop-color="#f0ffee"/><stop offset="0.5833" stop-color="#fffdec"/><stop offset="0.6667" stop-color="#ffecdc"/><stop offset="0.7500" stop-color="#ffddcd"/><stop offset="0.8333" stop-color="#ffcfc0"/><stop offset="0.9167" stop-color="#ffc3b5"/><stop offset="1.0000" stop-color="#ffb7aa"/></linearGradient><linearGradient id="cr15" x1="0" x2="1" y1="0" y2="0"><stop offset="0.0000" stop-color="#91fff2"/><stop offset="0.0833" stop-color="#a0fff2"/><stop offset="0.1667" stop-color="#b0fff2"/><stop offset="0.2500" stop-color="#c0fff2"/><stop offset="0.3333" stop-color="#d0fff1"/><stop offset="0.4167" stop-color="#e1fff1"/><stop offset="0.5000" stop-color="#f3fff1"/><stop offset="0.5833" stop-color="#fffaec"/><stop offset="0.6667" stop-color="#ffe9dc"/><stop offset="0.7500" stop-color="#ffdace"/><stop offset="0.8333" stop-color="#ffcdc1"/><stop offset="0.9167" stop-color="#ffc0b5"/><stop offset="1.0000" stop-color="#ffb5aa"/></linearGradient><linearGradient id="cr16" x1="0" x2="1" y1="0" y2="0"><stop offset="0.0000" stop-color="#93fff5"/><stop offset="0.0833" stop-color="#a3fff5"/><stop offset="0.1667" stop-color="#b2fff5"/><stop offset="0.2500" stop-color="#c2fff5"/><stop offset="0.3333" stop-color="#d3fff5"/><stop offset="0.4167" stop-color="#e4fff5"/><stop offset="0.5000" stop-color="#f6fff4"/><stop offset="0.5833" stop-color="#fff6ec"/><stop offset="0.6667" stop-color="#ffe6dc"/><stop offset="0.7500" stop-color="#ffd7ce"/><stop offset="0.8333" stop-color="#ffcac1"/><stop offset="0.9167" stop-color="#ffbeb6"/><stop offset="1.0000" stop-color="#ffb3ab"/></linearGradient><linearGradient id="cr17" x1="0" x2="1" y1="0" y2="0"><stop offset="0.0000" stop-color="#96fff8"/><stop offset="0.0833" stop-color="#a5fff8"/><stop offset="0.1667" stop-color="#b5fff8"/><stop offset="0.2500" stop-color="#c5fff8"/><stop offset="0.3333" stop-color="#d6fff8"/><stop offset="0.4167" stop-color="#e7fff8"/><stop offset="0.5000" stop-color="#f9fff8"/><stop offset="0.5833" stop-color="#fff3ec"/><stop offset="0.6667" stop-color="#ffe3dd"/><stop offset="0.7500" stop-color="#ffd5cf"/><stop offset="0.8333" stop-color="#ffc8c2"/><stop offset="0.9167" stop-color="#ffbcb6"/><stop offset="1.0000" stop-color="#ffb1ab"/></linearGradient><linearGradient id="cr18" x1="0" x2="1" y1="0" y2="0"><stop offset="0.0000" stop-color="#98fffb"/><stop offset="0.0833" stop-color="#a7fffb"/><stop offset="0.1667" stop-color="#b7fffb"/><stop offset="0.2500" stop-color="#c8fffb"/><stop offset="0.3333" stop-color="#d9fffb"/><stop offset="0.4167" stop-color="#eafffb"/><stop offset="0.5000" stop-color="#fcfffb"/><stop offset="0.5833" stop-color="#fff0ed"/><stop offset="0.6667" stop-color="#ffe1dd"/><stop offset="0.7500" stop-color="#ffd2cf"/><stop offset="0.8333" stop-color="#ffc5c2"/><stop offset="0.9167" stop-color="#ffb9b7"/><stop offset="1.0000" stop-color="#ffafac"/></linearGradient><linearGradient id="cr19" x1="0" x2="1" y1="0" y2="0"><stop offset="0.0000" stop-color="#9affff"/><stop offset="0.0833" stop-color="#aaffff"/><stop offset="0.1667" stop-color="#baffff"/><stop offset="0.2500" stop-color="#caffff"/><stop offset="0.3333" stop-color="#dbffff"/><stop offset="0.4167" stop-color="#edffff"/><stop offset="0.5000" stop-color="#fffffe"/><stop offset="0.5833" stop-color="#ffeded"/><stop offset="0.6667" stop-color="#ffdede"/><stop offset="0.7500" stop-color="#ffd0cf"/><stop offset="0.8333" stop-color="#ffc3c3"/><stop offset="0.9167" stop-color="#ffb7b7"/><stop offset="1.0000" stop-color="#ffacac"/></linearGradient><linearGradient id="cr20" x1="0" x2="1" y1="0" y2="0"><stop offset="0.0000" stop-color="#9afcff"/><stop offset="0.0833" stop-color="#aafcff"/><stop offset="0.1667" stop-color="#bafcff"/><stop offset="0.2500" stop-color="#cbfcff"/><stop offset="0.3333" stop-color="#dcfcff"/><stop offset="0.4167" stop-color="#edfcff"/><stop offset="0.5000" stop-color="#fffcff"/><stop offset="0.5833" stop-color="#ffeaed"/><stop offset="0.6667" stop-color="#ffdbde"/><stop offset="0.7500" stop-color="#ffcdd0"/><stop offset="0.8333" stop-color="#ffc0c3"/><stop offset="0.9167" stop-color="#ffb5b7"/><stop offset="1.0000" stop-color="#ffaaad"/></linearGradient><linearGradient id="cr21" x1="0" x2="1" y1="0" y2="0"><stop offset="0.0000" stop-color="#9bf9ff"/><stop offset="0.0833" stop-color="#aaf9ff"/><stop offset="0.1667" stop-color="#baf9ff"/><stop offset="0.2500" stop-color="#cbf9ff"/><stop offset="0.3333" stop-color="#dcf9ff"/><stop offset="0.4167" stop-color="#edf8ff"/><stop offset="0.5000" stop-color="#fff8ff"/><stop offset="0.5833" stop-color="#ffe7ee"/><stop offset="0.6667" stop-color="#ffd8de"/><stop offset="0.7500" stop-color="#ffcad0"/><stop offset="0.8333" stop-color="#ffbec4"/><stop offset="0.9167" stop-color="#ffb3b8"/><stop offset="1.0000" stop-color="#ffa8ad"/></linearGradient><linearGradient id="cr22" x1="0" x2="1" y1="0" y2="0"><stop offset="0.0000" stop-color="#9bf6ff"/><stop offset="0.0833" stop-color="#abf6ff"/><stop offset="0.1667" stop-color="#baf6ff"/><stop offset="0.2500" stop-color="#cbf5ff"/><stop offset="0.3333" stop-color="#dcf5ff"/><stop offset="0.4167" stop-color="#edf5ff"/><stop offset="0.5000" stop-color="#fff5ff"/><stop offset="0.5833" stop-color="#ffe4ee"/><stop offset="0.6667" stop-color="#ffd5df"/><stop offset="0.7500" stop-color="#ffc8d1"/><stop offset="0.8333" stop-color="#ffbcc4"/><stop offset="0.9167" stop-color="#ffb0b8"/><stop offset="1.0000" stop-color="#ffa6ae"/></linearGradient><linearGradient id="cr23" x1="0" x2="1" y1="0" y2="0"><stop offset="0.0000" stop-color="#9bf3ff"/><stop offset="0.0833" stop-color="#abf3ff"/><stop offset="0.1667" stop-color="#bbf2ff"/><stop offset="0.2500" stop-color="#cbf2ff"/><stop offset="0.3333" stop-color="#dcf2ff"/><stop offset="0.4167" stop-color="#edf2ff"/><stop offset="0.5000" stop-color="#fff2ff"/><stop offset="0.5833" stop-color="#ffe2ee"/><stop offset="0.6667" stop-color="#ffd3df"/><stop offset="0.7500" stop-color="#ffc5d1"/><stop offset="0.8333" stop-color="#ffb9c4"/><stop offset="0.9167" stop-color="#ffaeb9"/><stop offset="1.0000" stop-color="#ffa4ae"/></linearGradient><linearGradient id="cr24" x1="0" x2="1" y1="0" y2="0"><stop offset="0.0000" stop-color="#9cf0ff"/><stop offset="0.0833" stop-color="#abf0ff"/><stop offset="0.1667" stop-color="#bbefff"/><stop offset="0.2500" stop-color="#cbefff"/><stop offset="0.3333" stop-color="#dbefff"/><stop offset="0.4167" stop-color="#edeeff"/><stop offset="0.5000" stop-color="#feeeff"/><stop offset="0.5833" stop-color="#ffdfef"/><stop offset="0.6667" stop-color="#ffd0df"/><stop offset="0.7500" stop-color="#ffc3d1"/><stop offset="0.8333" stop-color="#ffb7c5"/><stop offset="0.9167" stop-color="#ffacb9"/><stop offset="1.0000" stop-color="#ffa2af"/></linearGradient><linearGradient id="cr25" x1="0" x2="1" y1="0" y2="0"><stop offset="0.0000" stop-color="#9cedff"/><stop offset="0.0833" stop-color="#abecff"/><stop offset="0.1667" stop-color="#bbecff"/><stop offset="0.2500" stop-color="#cbecff"/><stop offset="0.3333" stop-color="#dbecff"/><stop offset="0.4167" stop-color="#ecebff"/><stop offset="0.5000" stop-color="#feebff"/><stop offset="0.5833" stop-color="#ffdcef"/><stop offset="0.6667" stop-color="#ffcde0"/><stop offset="0.7500" stop-color="#ffc0d2"/><stop offset="0.8333" stop-color="#ffb5c5"/><stop offset="0.9167" stop-color="#ffaaba"/><stop offset="1.0000" stop-color="#ffa0af"/></linearGradient><linearGradient id="cr26" x1="0" x2="1" y1="0" y2="0"><stop offset="0.0000" stop-color="#9ceaff"/><stop offset="0.0833" stop-color="#abe9ff"/><stop offset="0.1667" stop-color="#bbe9ff"/><stop offset="0.2500" stop-color="#cbe9ff"/><stop offset="0.3333" stop-color="#dbe8ff"/><stop offset="0.4167" stop-color="#ece8ff"/><stop offset="0.5000" stop-color="#fee8ff"/><stop offset="0.5833" stop-color="#ffd9ef"/><stop offset="0.6667" stop-color="#ffcbe0"/><stop offset="0.7500" stop-color="#ffbed2"/><stop offset="0.8333" stop-color="#ffb2c6"/><stop offset="0.9167" stop-color="#ffa8ba"/><stop offset="1.0000" stop-color="#ff9eb0"/></linearGradient><linearGradient id="cr27" x1="0" x2="1" y1="0" y2="0"><stop offset="0.0000" stop-color="#9ce7ff"/><stop offset="0.0833" stop-color="#abe6ff"/><stop offset="0.1667" stop-color="#bbe6ff"/><stop offset="0.2500" stop-color="#cbe6ff"/><stop offset="0.3333" stop-color="#dbe5ff"/><stop offset="0.4167" stop-color="#ece5ff"/><stop offset="0.5000" stop-color="#fee4ff"/><stop offset="0.5833" stop-color="#ffd6f0"/><stop offset="0.6667" stop-color="#ffc8e0"/><stop offset="0.7500" stop-color="#ffbcd3"/><stop offset="0.8333" stop-color="#ffb0c6"/><stop offset="0.9167" stop-color="#ffa5bb"/><stop offset="1.0000" stop-color="#ff9cb0"/></linearGradient><linearGradient id="cr28" x1="0" x2="1" y1="0" y2="0"><stop offset="0.0000" stop-color="#9de4ff"/><stop offset="0.0833" stop-color="#ace3ff"/><stop offset="0.1667" stop-color="#bbe3ff"/><stop offset="0.2500" stop-color="#cbe3ff"/><stop offset="0.3333" stop-color="#dbe2ff"/><stop offset="0.4167" stop-color="#ece2ff"/><stop offset="0.5000" stop-color="#fde1ff"/><stop offset="0.5833" stop-color="#ffd3f0"/><stop offset="0.6667" stop-color="#ffc6e1"/><stop offset="0.7500" stop-color="#ffb9d3"/><stop offset="0.8333" stop-color="#ffaec6"/><stop offset="0.9167" stop-color="#ffa3bb"/><stop offset="1.0000" stop-color="#ff9ab0"/></linearGradient><linearGradient id="cr29" x1="0" x2="1" y1="0" y2="0"><stop offset="0.0000" stop-color="#9de1ff"/><stop offset="0.0833" stop-color="#ace0ff"/><stop offset="0.1667" stop-color="#bbe0ff"/><stop offset="0.2500" stop-color="#cbe0ff"/><stop offset="0.3333" stop-color="#dbdfff"/><stop offset="0.4167" stop-color="#ecdfff"/><stop offset="0.5000" stop-color="#fddeff"/><stop offset="0.5833" stop-color="#ffd1f0"/><stop offset="0.6667" stop-color="#ffc3e1"/><stop offset="0.7500" stop-color="#ffb7d3"/><stop offset="0.8333" stop-color="#ffabc7"/><stop offset="0.9167" stop-color="#ffa1bb"/><stop offset="1.0000" stop-color="#ff98b1"/></linearGradient><linearGradient id="cr30" x1="0" x2="1" y1="0" y2="0"><stop offset="0.0000" stop-color="#9ddeff"/><stop offset="0.0833" stop-color="#acddff"/><stop offset="0.1667" stop-color="#bbddff"/><stop offset="0.2500" stop-color="#cbdcff"/><stop offset="0.3333" stop-color="#dbdcff"/><stop offset="0.4167" stop-color="#ecdbff"/><stop offset="0.5000" stop-color="#fddbff"/><stop offset="0.5833" stop-color="#ffcef0"/><stop offset="0.6667" stop-color="#ffc0e1"/><stop offset="0.7500" stop-color="#ffb4d4"/><stop offset="0.8333" stop-color="#ffa9c7"/><stop offset="0.9167" stop-color="#ff9fbc"/><stop offset="1.0000" stop-color="#ff96b1"/></linearGradient><linearGradient id="cr31" x1="0" x2="1" y1="0" y2="0"><stop offset="0.0000" stop-color="#9ddbff"/><stop offset="0.0833" stop-color="#acdbff"/><stop offset="0.1667" stop-color="#bbdaff"/><stop offset="0.2500" stop-color="#cbdaff"/><stop offset="0.3333" stop-color="#dbd9ff"/><stop offset="0.4167" stop-color="#ecd8ff"/><stop offset="0.5000" stop-color="#fdd8ff"/><stop offset="0.5833" stop-color="#ffcbf1"/><stop offset="0.6667" stop-color="#ffbee2"/><stop offset="0.7500" stop-color="#ffb2d4"/><stop offset="0.8333" stop-color="#ffa7c8"/><stop offset="0.9167" stop-color="#ff9dbc"/><stop offset="1.0000" stop-color="#ff94b2"/></linearGradient><linearGradient id="cr32" x1="0" x2="1" y1="0" y2="0"><stop offset="0.0000" stop-color="#9ed8ff"/><stop offset="0.0833" stop-color="#acd8ff"/><stop offset="0.1667" stop-color="#bcd7ff"/><stop offset="0.2500" stop-color="#cbd7ff"/><stop offset="0.3333" stop-color="#dbd6ff"/><stop offset="0.4167" stop-color="#ecd5ff"/><stop offset="0.5000" stop-color="#fcd5ff"/><stop offset="0.5833" stop-color="#ffc8f1"/><stop offset="0.6667" stop-color="#ffbbe2"/><stop offset="0.7500" stop-color="#ffb0d4"/><stop offset="0.8333" stop-color="#ffa5c8"/><stop offset="0.9167" stop-color="#ff9bbd"/><stop offset="1.0000" stop-color="#ff92b2"/></linearGradient><linearGradient id="cr33" x1="0" x2="1" y1="0" y2="0"><stop offset="0.0000" stop-color="#9ed5ff"/><stop offset="0.0833" stop-color="#add5ff"/><stop offset="0.1667" stop-color="#bcd4ff"/><stop offset="0.2500" stop-color="#cbd4ff"/><stop offset="0.3333" stop-color="#dbd3ff"/><stop offset="0.4167" stop-color="#ebd2ff"/><stop offset="0.5000" stop-color="#fcd2ff"/><stop offset="0.5833" stop-color="#ffc6f1"/><stop offset="0.6667" stop-color="#ffb9e2"/><stop offset="0.7500" stop-color="#ffadd5"/><stop offset="0.8333" stop-color="#ffa3c8"/><stop offset="0.9167" stop-color="#ff99bd"/><stop offset="1.0000" stop-color="#ff90b3"/></linearGradient><linearGradient id="cr34" x1="0" x2="1" y1="0" y2="0"><stop offset="0.0000" stop-color="#9ed3ff"/><stop offset="0.0833" stop-color="#add2ff"/><stop offset="0.1667" stop-color="#bcd1ff"/><stop offset="0.2500" stop-color="#cbd1ff"/><stop offset="0.3333" stop-color="#dbd0ff"/><stop offset="0.4167" stop-color="#ebcfff"/><stop offset="0.5000" stop-color="#fccfff"/><stop offset="0.5833" stop-color="#ffc3f2"/><stop offset="0.6667" stop-color="#ffb6e3"/><stop offset="0.7500" stop-color="#ffabd5"/><stop offset="0.8333" stop-color="#ffa0c9"/><stop offset="0.9167" stop-color="#ff97bd"/><stop offset="1.0000" stop-color="#ff8eb3"/></linearGradient><linearGradient id="cr35" x1="0" x2="1" y1="0" y2="0"><stop offset="0.0000" stop-color="#9ed0ff"/><stop offset="0.0833" stop-color="#adcfff"/><stop offset="0.1667" stop-color="#bccfff"/><stop offset="0.2500" stop-color="#cbceff"/><stop offset="0.3333" stop-color="#dbcdff"/><stop offset="0.4167" stop-color="#ebccff"/><stop offset="0.5000" stop-color="#fcccff"/><stop offset="0.5833" stop-color="#ffc1f2"/><stop offset="0.6667" stop-color="#ffb4e3"/><stop offset="0.7500" stop-color="#ffa9d5"/><stop offset="0.8333" stop-color="#ff9ec9"/><stop offset="0.9167" stop-color="#ff95be"/><stop offset="1.0000" stop-color="#ff8cb4"/></linearGradient><linearGradient id="cr36" x1="0" x2="1" y1="0" y2="0"><stop offset="0.0000" stop-color="#9fcdff"/><stop offset="0.0833" stop-color="#adccff"/><stop offset="0.1667" stop-color="#bcccff"/><stop offset="0.2500" stop-color="#cbcbff"/><stop offset="0.3333" stop-color="#dbcaff"/><stop offset="0.4167" stop-color="#ebcaff"/><stop offset="0.5000" stop-color="#fcc9ff"/><stop offset="0.5833" stop-color="#ffbef2"/><stop offset="0.6667" stop-color="#ffb2e3"/><stop offset="0.7500" stop-color="#ffa6d6"/><stop offset="0.8333" stop-color="#ff9cca"/><stop offset="0.9167" stop-color="#ff93be"/><stop offset="1.0000" stop-color="#ff8ab4"/></linearGradient><linearGradient id="cr37" x1="0" x2="1" y1="0" y2="0"><stop offset="0.0000" stop-color="#9fcaff"/><stop offset="0.0833" stop-color="#adcaff"/><stop offset="0.1667" stop-color="#bcc9ff"/><stop offset="0.2500" stop-color="#cbc8ff"/><stop offset="0.3333" stop-color="#dbc7ff"/><stop offset="0.4167" stop-color="#ebc7ff"/><stop offset="0.5000" stop-color="#fbc6ff"/><stop offset="0.5833" stop-color="#ffbbf2"/><stop offset="0.6667" stop-color="#ffafe4"/><stop offset="0.7500" stop-color="#ffa4d6"/><stop offset="0.8333" stop-color="#ff9aca"/><stop offset="0.9167" stop-color="#ff91bf"/><stop offset="1.0000" stop-color="#ff88b4"/></linearGradient><filter id="cbl" x="-5%" y="-5%" width="110%" height="110%"><feGaussianBlur stdDeviation="2.2"/></filter>
<clipPath id="cc"><rect x="363.4" y="690.1" width="252.6" height="166.5"/></clipPath>
</defs>
<text x="472.00" y="686.00" font-size="13.40" fill="#dadada" text-anchor="middle" textLength="75.00" lengthAdjust="spacingAndGlyphs" stroke="#dadada" stroke-width="0.3">CIE 1931 xy</text>
<g clip-path="url(#cc)"><g filter="url(#cbl)"><rect x="338.14" y="680.11" width="303.12" height="5.30" fill="url(#cr0)"/><rect x="338.14" y="685.00" width="303.12" height="5.30" fill="url(#cr1)"/><rect x="338.14" y="689.90" width="303.12" height="5.30" fill="url(#cr2)"/><rect x="338.14" y="694.80" width="303.12" height="5.30" fill="url(#cr3)"/><rect x="338.14" y="699.69" width="303.12" height="5.30" fill="url(#cr4)"/><rect x="338.14" y="704.59" width="303.12" height="5.30" fill="url(#cr5)"/><rect x="338.14" y="709.49" width="303.12" height="5.30" fill="url(#cr6)"/><rect x="338.14" y="714.39" width="303.12" height="5.30" fill="url(#cr7)"/><rect x="338.14" y="719.28" width="303.12" height="5.30" fill="url(#cr8)"/><rect x="338.14" y="724.18" width="303.12" height="5.30" fill="url(#cr9)"/><rect x="338.14" y="729.08" width="303.12" height="5.30" fill="url(#cr10)"/><rect x="338.14" y="733.97" width="303.12" height="5.30" fill="url(#cr11)"/><rect x="338.14" y="738.87" width="303.12" height="5.30" fill="url(#cr12)"/><rect x="338.14" y="743.77" width="303.12" height="5.30" fill="url(#cr13)"/><rect x="338.14" y="748.66" width="303.12" height="5.30" fill="url(#cr14)"/><rect x="338.14" y="753.56" width="303.12" height="5.30" fill="url(#cr15)"/><rect x="338.14" y="758.46" width="303.12" height="5.30" fill="url(#cr16)"/><rect x="338.14" y="763.36" width="303.12" height="5.30" fill="url(#cr17)"/><rect x="338.14" y="768.25" width="303.12" height="5.30" fill="url(#cr18)"/><rect x="338.14" y="773.15" width="303.12" height="5.30" fill="url(#cr19)"/><rect x="338.14" y="778.05" width="303.12" height="5.30" fill="url(#cr20)"/><rect x="338.14" y="782.94" width="303.12" height="5.30" fill="url(#cr21)"/><rect x="338.14" y="787.84" width="303.12" height="5.30" fill="url(#cr22)"/><rect x="338.14" y="792.74" width="303.12" height="5.30" fill="url(#cr23)"/><rect x="338.14" y="797.64" width="303.12" height="5.30" fill="url(#cr24)"/><rect x="338.14" y="802.53" width="303.12" height="5.30" fill="url(#cr25)"/><rect x="338.14" y="807.43" width="303.12" height="5.30" fill="url(#cr26)"/><rect x="338.14" y="812.33" width="303.12" height="5.30" fill="url(#cr27)"/><rect x="338.14" y="817.22" width="303.12" height="5.30" fill="url(#cr28)"/><rect x="338.14" y="822.12" width="303.12" height="5.30" fill="url(#cr29)"/><rect x="338.14" y="827.02" width="303.12" height="5.30" fill="url(#cr30)"/><rect x="338.14" y="831.91" width="303.12" height="5.30" fill="url(#cr31)"/><rect x="338.14" y="836.81" width="303.12" height="5.30" fill="url(#cr32)"/><rect x="338.14" y="841.71" width="303.12" height="5.30" fill="url(#cr33)"/><rect x="338.14" y="846.61" width="303.12" height="5.30" fill="url(#cr34)"/><rect x="338.14" y="851.50" width="303.12" height="5.30" fill="url(#cr35)"/><rect x="338.14" y="856.40" width="303.12" height="5.30" fill="url(#cr36)"/><rect x="338.14" y="861.30" width="303.12" height="5.30" fill="url(#cr37)"/></g></g>
<rect x="363.4" y="690.1" width="252.6" height="166.5" fill="none" stroke="#a0a0a8" stroke-width="1.2"/>
<g clip-path="url(#cc)"><path d="M394.6 858.2 Q 501 783.0 620 714.8" fill="none" stroke="#000" stroke-width="2.9"/></g>
<rect x="482.6" y="766.3" width="12.2" height="12.2" fill="#fff" stroke="#000" stroke-width="2"/>
<circle cx="402.1" cy="817.5" r="4.4" fill="#404040" stroke="#111" stroke-width="0.9"/>
<circle cx="400.6" cy="822.6" r="4.4" fill="#303030" stroke="#111" stroke-width="0.9"/>
<circle cx="398.6" cy="822.4" r="4.4" fill="#a8a8a8" stroke="#111" stroke-width="0.9"/>
<circle cx="394.8" cy="824.8" r="4.4" fill="#e6e6e6" stroke="#111" stroke-width="0.9"/>
<circle cx="388.2" cy="826.9" r="4.4" fill="#0a0a0a" stroke="#111" stroke-width="0.9"/>
<circle cx="386.8" cy="834.5" r="4.4" fill="#f2f2f2" stroke="#111" stroke-width="0.9"/>
<circle cx="391.0" cy="828.3" r="4.4" fill="#ffffff" stroke="#111" stroke-width="0.9"/>
<line x1="357" y1="739.3" x2="363.4" y2="739.3" stroke="#dcdcdc" stroke-width="1.2"/>
<text x="356.30" y="744.40" font-size="14.20" fill="#dadada" text-anchor="end" textLength="28.46" lengthAdjust="spacingAndGlyphs" stroke="#dadada" stroke-width="0.3">0,34</text>
<line x1="357" y1="806.3" x2="363.4" y2="806.3" stroke="#dcdcdc" stroke-width="1.2"/>
<text x="356.30" y="811.40" font-size="14.20" fill="#dadada" text-anchor="end" textLength="28.46" lengthAdjust="spacingAndGlyphs" stroke="#dadada" stroke-width="0.3">0,32</text>
<line x1="374.4" y1="856.6" x2="374.4" y2="862.1" stroke="#dcdcdc" stroke-width="1.3"/>
<text x="374.40" y="878.10" font-size="14.20" fill="#dadada" text-anchor="middle" textLength="28.46" lengthAdjust="spacingAndGlyphs" stroke="#dadada" stroke-width="0.3">0,29</text>
<line x1="424.7" y1="856.6" x2="424.7" y2="862.1" stroke="#dcdcdc" stroke-width="1.3"/>
<text x="424.70" y="878.10" font-size="14.20" fill="#dadada" text-anchor="middle" textLength="20.33" lengthAdjust="spacingAndGlyphs" stroke="#dadada" stroke-width="0.3">0,3</text>
<line x1="475.4" y1="856.6" x2="475.4" y2="862.1" stroke="#dcdcdc" stroke-width="1.3"/>
<text x="475.40" y="878.10" font-size="14.20" fill="#dadada" text-anchor="middle" textLength="28.46" lengthAdjust="spacingAndGlyphs" stroke="#dadada" stroke-width="0.3">0,31</text>
<line x1="525.7" y1="856.6" x2="525.7" y2="862.1" stroke="#dcdcdc" stroke-width="1.3"/>
<text x="525.70" y="878.10" font-size="14.20" fill="#dadada" text-anchor="middle" textLength="28.46" lengthAdjust="spacingAndGlyphs" stroke="#dadada" stroke-width="0.3">0,32</text>
<line x1="576.0" y1="856.6" x2="576.0" y2="862.1" stroke="#dcdcdc" stroke-width="1.3"/>
<text x="576.00" y="878.10" font-size="14.20" fill="#dadada" text-anchor="middle" textLength="28.46" lengthAdjust="spacingAndGlyphs" stroke="#dadada" stroke-width="0.3">0,33</text>
</svg>
<div id="table" class="abs" style="left:626.4px;top:661.7px;width:1033.0px;height:225.8px;overflow:hidden;background:#555;box-shadow:0 0 0 1px #141414,2px 2px 2px 1px #242424">
<div class="abs" style="left:0;top:0;width:100%;height:25.6px;background:linear-gradient(#262626 0,#232323 51%,#0a0a0a 51%,#171717 100%)"></div>
<span class="t" style="left:147.23px;top:8.04px;font-size:12.00px;color:#f6f6f6;font-weight:700;transform:scaleX(0.93);transform-origin:100% 0;">0</span>
<span class="t" style="left:206.13px;top:8.04px;font-size:12.00px;color:#f6f6f6;font-weight:700;transform:scaleX(0.93);transform-origin:100% 0;">5</span>
<span class="t" style="left:258.25px;top:8.04px;font-size:12.00px;color:#f6f6f6;font-weight:700;transform:scaleX(0.93);transform-origin:100% 0;">10</span>
<span class="t" style="left:309.91px;top:8.04px;font-size:12.00px;color:#f6f6f6;font-weight:700;transform:scaleX(0.93);transform-origin:100% 0;">15</span>
<span class="t" style="left:361.57px;top:8.04px;font-size:12.00px;color:#f6f6f6;font-weight:700;transform:scaleX(0.93);transform-origin:100% 0;">20</span>
<span class="t" style="left:413.23px;top:8.04px;font-size:12.00px;color:#f6f6f6;font-weight:700;transform:scaleX(0.93);transform-origin:100% 0;">25</span>
<span class="t" style="left:464.89px;top:8.04px;font-size:12.00px;color:#f6f6f6;font-weight:700;transform:scaleX(0.93);transform-origin:100% 0;">30</span>
<span class="t" style="left:516.55px;top:8.04px;font-size:12.00px;color:#f6f6f6;font-weight:700;transform:scaleX(0.93);transform-origin:100% 0;">35</span>
<span class="t" style="left:568.21px;top:8.04px;font-size:12.00px;color:#f6f6f6;font-weight:700;transform:scaleX(0.93);transform-origin:100% 0;">40</span>
<span class="t" style="left:619.87px;top:8.04px;font-size:12.00px;color:#f6f6f6;font-weight:700;transform:scaleX(0.93);transform-origin:100% 0;">45</span>
<span class="t" style="left:671.53px;top:8.04px;font-size:12.00px;color:#f6f6f6;font-weight:700;transform:scaleX(0.93);transform-origin:100% 0;">50</span>
<span class="t" style="left:723.19px;top:8.04px;font-size:12.00px;color:#f6f6f6;font-weight:700;transform:scaleX(0.93);transform-origin:100% 0;">55</span>
<span class="t" style="left:774.85px;top:8.04px;font-size:12.00px;color:#f6f6f6;font-weight:700;transform:scaleX(0.93);transform-origin:100% 0;">60</span>
<span class="t" style="left:826.51px;top:8.04px;font-size:12.00px;color:#f6f6f6;font-weight:700;transform:scaleX(0.93);transform-origin:100% 0;">65</span>
<span class="t" style="left:878.17px;top:8.04px;font-size:12.00px;color:#f6f6f6;font-weight:700;transform:scaleX(0.93);transform-origin:100% 0;">70</span>
<span class="t" style="left:929.83px;top:8.04px;font-size:12.00px;color:#f6f6f6;font-weight:700;transform:scaleX(0.93);transform-origin:100% 0;">75</span>
<span class="t" style="left:981.49px;top:8.04px;font-size:12.00px;color:#f6f6f6;font-weight:700;transform:scaleX(0.93);transform-origin:100% 0;">80</span>
<span class="t" style="left:1033.15px;top:8.04px;font-size:12.00px;color:#f6f6f6;font-weight:700;transform:scaleX(0.93);transform-origin:100% 0;">85</span>
<span class="t" style="left:1084.81px;top:8.04px;font-size:12.00px;color:#f6f6f6;font-weight:700;transform:scaleX(0.93);transform-origin:100% 0;">90</span>
<span class="t" style="left:1136.47px;top:8.04px;font-size:12.00px;color:#f6f6f6;font-weight:700;transform:scaleX(0.93);transform-origin:100% 0;">95</span>
<span class="t" style="left:1181.46px;top:8.04px;font-size:12.00px;color:#f6f6f6;font-weight:700;transform:scaleX(0.93);transform-origin:100% 0;">100</span>
<div class="abs" style="left:0;top:25.2px;width:100%;height:23.2px;background:#424242">
<span class="t" style="left:9.80px;top:5.28px;font-size:14.20px;color:#f6f6f6;font-weight:700;transform:scaleX(0.8406);transform-origin:0 0;">x: CIE31</span>
<span class="t" style="left:124.90px;top:6.11px;font-size:14.40px;color:#f2f2f2;transform:scaleX(0.8750);transform-origin:0 0;">0,28</span>
<span class="t" style="left:183.80px;top:6.11px;font-size:14.40px;color:#f2f2f2;transform:scaleX(0.8750);transform-origin:0 0;">0,29</span>
<span class="t" style="left:242.60px;top:6.11px;font-size:14.40px;color:#f2f2f2;transform:scaleX(0.8750);transform-origin:0 0;">0,30</span>
<span class="t" style="left:294.26px;top:6.11px;font-size:14.40px;color:#f2f2f2;transform:scaleX(0.8750);transform-origin:0 0;">0,29</span>
<span class="t" style="left:345.92px;top:6.11px;font-size:14.40px;color:#f2f2f2;transform:scaleX(0.8750);transform-origin:0 0;">0,29</span>
<span class="t" style="left:397.58px;top:6.11px;font-size:14.40px;color:#f2f2f2;transform:scaleX(0.8750);transform-origin:0 0;">0,30</span>
<span class="t" style="left:449.24px;top:6.11px;font-size:14.40px;color:#f2f2f2;transform:scaleX(0.8750);transform-origin:0 0;">0,29</span>
<span class="t" style="left:500.90px;top:6.11px;font-size:14.40px;color:#f2f2f2;transform:scaleX(0.8750);transform-origin:0 0;">0,29</span>
<span class="t" style="left:552.56px;top:6.11px;font-size:14.40px;color:#f2f2f2;transform:scaleX(0.8750);transform-origin:0 0;">0,29</span>
<span class="t" style="left:604.22px;top:6.11px;font-size:14.40px;color:#f2f2f2;transform:scaleX(0.8750);transform-origin:0 0;">0,29</span>
<span class="t" style="left:655.88px;top:6.11px;font-size:14.40px;color:#f2f2f2;transform:scaleX(0.8750);transform-origin:0 0;">0,29</span>
<span class="t" style="left:707.54px;top:6.11px;font-size:14.40px;color:#f2f2f2;transform:scaleX(0.8750);transform-origin:0 0;">0,29</span>
<span class="t" style="left:759.20px;top:6.11px;font-size:14.40px;color:#f2f2f2;transform:scaleX(0.8750);transform-origin:0 0;">0,29</span>
<span class="t" style="left:810.86px;top:6.11px;font-size:14.40px;color:#f2f2f2;transform:scaleX(0.8750);transform-origin:0 0;">0,29</span>
<span class="t" style="left:862.52px;top:6.11px;font-size:14.40px;color:#f2f2f2;transform:scaleX(0.8750);transform-origin:0 0;">0,29</span>
<span class="t" style="left:914.18px;top:6.11px;font-size:14.40px;color:#f2f2f2;transform:scaleX(0.8750);transform-origin:0 0;">0,29</span>
<span class="t" style="left:965.84px;top:6.11px;font-size:14.40px;color:#f2f2f2;transform:scaleX(0.8750);transform-origin:0 0;">0,29</span>
<span class="t" style="left:1017.50px;top:6.11px;font-size:14.40px;color:#f2f2f2;transform:scaleX(0.8750);transform-origin:0 0;">0,29</span>
<span class="t" style="left:1069.16px;top:6.11px;font-size:14.40px;color:#f2f2f2;transform:scaleX(0.8750);transform-origin:0 0;">0,29</span>
<span class="t" style="left:1120.82px;top:6.11px;font-size:14.40px;color:#f2f2f2;transform:scaleX(0.8750);transform-origin:0 0;">0,29</span>
<span class="t" style="left:1172.48px;top:6.11px;font-size:14.40px;color:#f2f2f2;transform:scaleX(0.8750);transform-origin:0 0;">0,29</span>
</div>
<div class="abs" style="left:0;top:48.3px;width:100%;height:23.2px;background:#7e7e7e">
<span class="t" style="left:9.80px;top:5.28px;font-size:14.20px;color:#f6f6f6;font-weight:700;transform:scaleX(0.8406);transform-origin:0 0;">y: CIE31</span>
<span class="t" style="left:124.90px;top:6.11px;font-size:14.40px;color:#f0f0f0;transform:scaleX(0.8750);transform-origin:0 0;">0,28</span>
<span class="t" style="left:183.80px;top:6.11px;font-size:14.40px;color:#f0f0f0;transform:scaleX(0.8750);transform-origin:0 0;">0,30</span>
<span class="t" style="left:242.60px;top:6.11px;font-size:14.40px;color:#f0f0f0;transform:scaleX(0.8750);transform-origin:0 0;">0,31</span>
<span class="t" style="left:294.26px;top:6.11px;font-size:14.40px;color:#f0f0f0;transform:scaleX(0.8750);transform-origin:0 0;">0,31</span>
<span class="t" style="left:345.92px;top:6.11px;font-size:14.40px;color:#f0f0f0;transform:scaleX(0.8750);transform-origin:0 0;">0,31</span>
<span class="t" style="left:397.58px;top:6.11px;font-size:14.40px;color:#f0f0f0;transform:scaleX(0.8750);transform-origin:0 0;">0,32</span>
<span class="t" style="left:449.24px;top:6.11px;font-size:14.40px;color:#f0f0f0;transform:scaleX(0.8750);transform-origin:0 0;">0,31</span>
<span class="t" style="left:500.90px;top:6.11px;font-size:14.40px;color:#f0f0f0;transform:scaleX(0.8750);transform-origin:0 0;">0,31</span>
<span class="t" style="left:552.56px;top:6.11px;font-size:14.40px;color:#f0f0f0;transform:scaleX(0.8750);transform-origin:0 0;">0,31</span>
<span class="t" style="left:604.22px;top:6.11px;font-size:14.40px;color:#f0f0f0;transform:scaleX(0.8750);transform-origin:0 0;">0,31</span>
<span class="t" style="left:655.88px;top:6.11px;font-size:14.40px;color:#f0f0f0;transform:scaleX(0.8750);transform-origin:0 0;">0,31</span>
<span class="t" style="left:707.54px;top:6.11px;font-size:14.40px;color:#f0f0f0;transform:scaleX(0.8750);transform-origin:0 0;">0,31</span>
<span class="t" style="left:759.20px;top:6.11px;font-size:14.40px;color:#f0f0f0;transform:scaleX(0.8750);transform-origin:0 0;">0,31</span>
<span class="t" style="left:810.86px;top:6.11px;font-size:14.40px;color:#f0f0f0;transform:scaleX(0.8750);transform-origin:0 0;">0,31</span>
<span class="t" style="left:862.52px;top:6.11px;font-size:14.40px;color:#f0f0f0;transform:scaleX(0.8750);transform-origin:0 0;">0,31</span>
<span class="t" style="left:914.18px;top:6.11px;font-size:14.40px;color:#f0f0f0;transform:scaleX(0.8750);transform-origin:0 0;">0,31</span>
<span class="t" style="left:965.84px;top:6.11px;font-size:14.40px;color:#f0f0f0;transform:scaleX(0.8750);transform-origin:0 0;">0,31</span>
<span class="t" style="left:1017.50px;top:6.11px;font-size:14.40px;color:#f0f0f0;transform:scaleX(0.8750);transform-origin:0 0;">0,31</span>
<span class="t" style="left:1069.16px;top:6.11px;font-size:14.40px;color:#f0f0f0;transform:scaleX(0.8750);transform-origin:0 0;">0,31</span>
<span class="t" style="left:1120.82px;top:6.11px;font-size:14.40px;color:#f0f0f0;transform:scaleX(0.8750);transform-origin:0 0;">0,31</span>
<span class="t" style="left:1172.48px;top:6.11px;font-size:14.40px;color:#f0f0f0;transform:scaleX(0.8750);transform-origin:0 0;">0,31</span>
</div>
<div class="abs" style="left:0;top:71.4px;width:100%;height:23.2px;background:#424242">
<span class="t" style="left:9.80px;top:5.28px;font-size:14.20px;color:#f6f6f6;font-weight:700;transform:scaleX(0.7707);transform-origin:0 0;">Y</span>
<span class="t" style="left:124.90px;top:6.11px;font-size:14.40px;color:#f2f2f2;transform:scaleX(0.8750);transform-origin:0 0;">0,29</span>
<span class="t" style="left:183.80px;top:6.11px;font-size:14.40px;color:#f2f2f2;transform:scaleX(0.8750);transform-origin:0 0;">0,81</span>
<span class="t" style="left:242.60px;top:6.11px;font-size:14.40px;color:#f2f2f2;transform:scaleX(0.8750);transform-origin:0 0;">2,96</span>
<span class="t" style="left:294.26px;top:6.11px;font-size:14.40px;color:#f2f2f2;transform:scaleX(0.8750);transform-origin:0 0;">6,47</span>
<span class="t" style="left:345.92px;top:6.11px;font-size:14.40px;color:#f2f2f2;transform:scaleX(0.8750);transform-origin:0 0;">12,80</span>
<span class="t" style="left:397.58px;top:6.11px;font-size:14.40px;color:#f2f2f2;transform:scaleX(0.8750);transform-origin:0 0;">21,38</span>
<span class="t" style="left:449.24px;top:6.11px;font-size:14.40px;color:#f2f2f2;transform:scaleX(0.8750);transform-origin:0 0;">30,19</span>
<span class="t" style="left:500.90px;top:6.11px;font-size:14.40px;color:#f2f2f2;transform:scaleX(0.8750);transform-origin:0 0;">42,73</span>
<span class="t" style="left:552.56px;top:6.11px;font-size:14.40px;color:#f2f2f2;transform:scaleX(0.8750);transform-origin:0 0;">58,14</span>
<span class="t" style="left:604.22px;top:6.11px;font-size:14.40px;color:#f2f2f2;transform:scaleX(0.8750);transform-origin:0 0;">77,49</span>
<span class="t" style="left:655.88px;top:6.11px;font-size:14.40px;color:#f2f2f2;transform:scaleX(0.8750);transform-origin:0 0;">99,34</span>
<span class="t" style="left:707.54px;top:6.11px;font-size:14.40px;color:#f2f2f2;transform:scaleX(0.8750);transform-origin:0 0;">122,37</span>
<span class="t" style="left:759.20px;top:6.11px;font-size:14.40px;color:#f2f2f2;transform:scaleX(0.8750);transform-origin:0 0;">149,23</span>
<span class="t" style="left:810.86px;top:6.11px;font-size:14.40px;color:#f2f2f2;transform:scaleX(0.8750);transform-origin:0 0;">178,66</span>
<span class="t" style="left:862.52px;top:6.11px;font-size:14.40px;color:#f2f2f2;transform:scaleX(0.8750);transform-origin:0 0;">207,35</span>
<span class="t" style="left:914.18px;top:6.11px;font-size:14.40px;color:#f2f2f2;transform:scaleX(0.8750);transform-origin:0 0;">239,25</span>
<span class="t" style="left:965.84px;top:6.11px;font-size:14.40px;color:#f2f2f2;transform:scaleX(0.8750);transform-origin:0 0;">278,10</span>
<span class="t" style="left:1017.50px;top:6.11px;font-size:14.40px;color:#f2f2f2;transform:scaleX(0.8750);transform-origin:0 0;">323,85</span>
<span class="t" style="left:1069.16px;top:6.11px;font-size:14.40px;color:#f2f2f2;transform:scaleX(0.8750);transform-origin:0 0;">365,92</span>
<span class="t" style="left:1120.82px;top:6.11px;font-size:14.40px;color:#f2f2f2;transform:scaleX(0.8750);transform-origin:0 0;">421,18</span>
<span class="t" style="left:1172.48px;top:6.11px;font-size:14.40px;color:#f2f2f2;transform:scaleX(0.8750);transform-origin:0 0;">461,14</span>
</div>
<div class="abs" style="left:0;top:94.5px;width:100%;height:23.2px;background:#7e7e7e">
<span class="t" style="left:9.80px;top:5.28px;font-size:14.20px;color:#f6f6f6;font-weight:700;transform:scaleX(0.8937);transform-origin:0 0;">Target Y</span>
<span class="t" style="left:124.90px;top:6.11px;font-size:14.40px;color:#f0f0f0;transform:scaleX(0.8750);transform-origin:0 0;">0,00</span>
<span class="t" style="left:183.80px;top:6.11px;font-size:14.40px;color:#f0f0f0;transform:scaleX(0.8750);transform-origin:0 0;">1,86</span>
<span class="t" style="left:242.60px;top:6.11px;font-size:14.40px;color:#f0f0f0;transform:scaleX(0.8750);transform-origin:0 0;">4,76</span>
<span class="t" style="left:294.26px;top:6.11px;font-size:14.40px;color:#f0f0f0;transform:scaleX(0.8750);transform-origin:0 0;">8,94</span>
<span class="t" style="left:345.92px;top:6.11px;font-size:14.40px;color:#f0f0f0;transform:scaleX(0.8750);transform-origin:0 0;">15,27</span>
<span class="t" style="left:397.58px;top:6.11px;font-size:14.40px;color:#f0f0f0;transform:scaleX(0.8750);transform-origin:0 0;">23,64</span>
<span class="t" style="left:449.24px;top:6.11px;font-size:14.40px;color:#f0f0f0;transform:scaleX(0.8750);transform-origin:0 0;">33,33</span>
<span class="t" style="left:500.90px;top:6.11px;font-size:14.40px;color:#f0f0f0;transform:scaleX(0.8750);transform-origin:0 0;">46,07</span>
<span class="t" style="left:552.56px;top:6.11px;font-size:14.40px;color:#f0f0f0;transform:scaleX(0.8750);transform-origin:0 0;">61,27</span>
<span class="t" style="left:604.22px;top:6.11px;font-size:14.40px;color:#f0f0f0;transform:scaleX(0.8750);transform-origin:0 0;">79,06</span>
<span class="t" style="left:655.88px;top:6.11px;font-size:14.40px;color:#f0f0f0;transform:scaleX(0.8750);transform-origin:0 0;">99,54</span>
<span class="t" style="left:707.54px;top:6.11px;font-size:14.40px;color:#f0f0f0;transform:scaleX(0.8750);transform-origin:0 0;">120,93</span>
<span class="t" style="left:759.20px;top:6.11px;font-size:14.40px;color:#f0f0f0;transform:scaleX(0.8750);transform-origin:0 0;">146,89</span>
<span class="t" style="left:810.86px;top:6.11px;font-size:14.40px;color:#f0f0f0;transform:scaleX(0.8750);transform-origin:0 0;">175,84</span>
<span class="t" style="left:862.52px;top:6.11px;font-size:14.40px;color:#f0f0f0;transform:scaleX(0.8750);transform-origin:0 0;">205,30</span>
<span class="t" style="left:914.18px;top:6.11px;font-size:14.40px;color:#f0f0f0;transform:scaleX(0.8750);transform-origin:0 0;">240,25</span>
<span class="t" style="left:965.84px;top:6.11px;font-size:14.40px;color:#f0f0f0;transform:scaleX(0.8750);transform-origin:0 0;">278,45</span>
<span class="t" style="left:1017.50px;top:6.11px;font-size:14.40px;color:#f0f0f0;transform:scaleX(0.8750);transform-origin:0 0;">319,07</span>
<span class="t" style="left:1069.16px;top:6.11px;font-size:14.40px;color:#f0f0f0;transform:scaleX(0.8750);transform-origin:0 0;">364,41</span>
<span class="t" style="left:1120.82px;top:6.11px;font-size:14.40px;color:#f0f0f0;transform:scaleX(0.8750);transform-origin:0 0;">411,63</span>
<span class="t" style="left:1172.48px;top:6.11px;font-size:14.40px;color:#f0f0f0;transform:scaleX(0.8750);transform-origin:0 0;">461,14</span>
</div>
<div class="abs" style="left:0;top:117.6px;width:100%;height:23.2px;background:#424242">
<span class="t" style="left:9.80px;top:5.28px;font-size:14.20px;color:#f6f6f6;font-weight:700;transform:scaleX(0.9088);transform-origin:0 0;">Gamma Log/Log</span>
<span class="t" style="left:124.90px;top:6.11px;font-size:14.40px;color:#f2f2f2;transform:scaleX(0.8750);transform-origin:0 0;">1,28</span>
<span class="t" style="left:183.80px;top:6.11px;font-size:14.40px;color:#f2f2f2;transform:scaleX(0.8750);transform-origin:0 0;">2,13</span>
<span class="t" style="left:242.60px;top:6.11px;font-size:14.40px;color:#f2f2f2;transform:scaleX(0.8750);transform-origin:0 0;">2,21</span>
<span class="t" style="left:294.26px;top:6.11px;font-size:14.40px;color:#f2f2f2;transform:scaleX(0.8750);transform-origin:0 0;">2,24</span>
<span class="t" style="left:345.92px;top:6.11px;font-size:14.40px;color:#f2f2f2;transform:scaleX(0.8750);transform-origin:0 0;">2,23</span>
<span class="t" style="left:397.58px;top:6.11px;font-size:14.40px;color:#f2f2f2;transform:scaleX(0.8750);transform-origin:0 0;">2,22</span>
<span class="t" style="left:449.24px;top:6.11px;font-size:14.40px;color:#f2f2f2;transform:scaleX(0.8750);transform-origin:0 0;">2,25</span>
<span class="t" style="left:500.90px;top:6.11px;font-size:14.40px;color:#f2f2f2;transform:scaleX(0.8750);transform-origin:0 0;">2,26</span>
<span class="t" style="left:552.56px;top:6.11px;font-size:14.40px;color:#f2f2f2;transform:scaleX(0.8750);transform-origin:0 0;">2,26</span>
<span class="t" style="left:604.22px;top:6.11px;font-size:14.40px;color:#f2f2f2;transform:scaleX(0.8750);transform-origin:0 0;">2,24</span>
<span class="t" style="left:655.88px;top:6.11px;font-size:14.40px;color:#f2f2f2;transform:scaleX(0.8750);transform-origin:0 0;">2,23</span>
<span class="t" style="left:707.54px;top:6.11px;font-size:14.40px;color:#f2f2f2;transform:scaleX(0.8750);transform-origin:0 0;">2,21</span>
<span class="t" style="left:759.20px;top:6.11px;font-size:14.40px;color:#f2f2f2;transform:scaleX(0.8750);transform-origin:0 0;">2,21</span>
<span class="t" style="left:810.86px;top:6.11px;font-size:14.40px;color:#f2f2f2;transform:scaleX(0.8750);transform-origin:0 0;">2,21</span>
<span class="t" style="left:862.52px;top:6.11px;font-size:14.40px;color:#f2f2f2;transform:scaleX(0.8750);transform-origin:0 0;">2,22</span>
<span class="t" style="left:914.18px;top:6.11px;font-size:14.40px;color:#f2f2f2;transform:scaleX(0.8750);transform-origin:0 0;">2,27</span>
<span class="t" style="left:965.84px;top:6.11px;font-size:14.40px;color:#f2f2f2;transform:scaleX(0.8750);transform-origin:0 0;">2,27</span>
<span class="t" style="left:1017.50px;top:6.11px;font-size:14.40px;color:#f2f2f2;transform:scaleX(0.8750);transform-origin:0 0;">2,21</span>
<span class="t" style="left:1069.16px;top:6.11px;font-size:14.40px;color:#f2f2f2;transform:scaleX(0.8750);transform-origin:0 0;">2,21</span>
<span class="t" style="left:1120.82px;top:6.11px;font-size:14.40px;color:#f2f2f2;transform:scaleX(0.8750);transform-origin:0 0;">2,37</span>
<span class="t" style="left:1172.48px;top:6.11px;font-size:14.40px;color:#f2f2f2;transform:scaleX(0.8750);transform-origin:0 0;">2,28</span>
</div>
<div class="abs" style="left:0;top:140.7px;width:100%;height:23.2px;background:#7e7e7e">
<span class="t" style="left:9.80px;top:5.28px;font-size:14.20px;color:#f6f6f6;font-weight:700;transform:scaleX(0.7641);transform-origin:0 0;">CCT</span>
<span class="t" style="left:124.90px;top:6.11px;font-size:14.40px;color:#f0f0f0;transform:scaleX(0.8750);transform-origin:0 0;">10948,00</span>
<span class="t" style="left:183.80px;top:6.11px;font-size:14.40px;color:#f0f0f0;transform:scaleX(0.8750);transform-origin:0 0;">8639,00</span>
<span class="t" style="left:242.60px;top:6.11px;font-size:14.40px;color:#f0f0f0;transform:scaleX(0.8750);transform-origin:0 0;">7785,00</span>
<span class="t" style="left:294.26px;top:6.11px;font-size:14.40px;color:#f0f0f0;transform:scaleX(0.8750);transform-origin:0 0;">8014,00</span>
<span class="t" style="left:345.92px;top:6.11px;font-size:14.40px;color:#f0f0f0;transform:scaleX(0.8750);transform-origin:0 0;">8016,00</span>
<span class="t" style="left:397.58px;top:6.11px;font-size:14.40px;color:#f0f0f0;transform:scaleX(0.8750);transform-origin:0 0;">7735,00</span>
<span class="t" style="left:449.24px;top:6.11px;font-size:14.40px;color:#f0f0f0;transform:scaleX(0.8750);transform-origin:0 0;">7799,00</span>
<span class="t" style="left:500.90px;top:6.11px;font-size:14.40px;color:#f0f0f0;transform:scaleX(0.8750);transform-origin:0 0;">7886,00</span>
<span class="t" style="left:552.56px;top:6.11px;font-size:14.40px;color:#f0f0f0;transform:scaleX(0.8750);transform-origin:0 0;">7966,00</span>
<span class="t" style="left:604.22px;top:6.11px;font-size:14.40px;color:#f0f0f0;transform:scaleX(0.8750);transform-origin:0 0;">7993,00</span>
<span class="t" style="left:655.88px;top:6.11px;font-size:14.40px;color:#f0f0f0;transform:scaleX(0.8750);transform-origin:0 0;">7971,00</span>
<span class="t" style="left:707.54px;top:6.11px;font-size:14.40px;color:#f0f0f0;transform:scaleX(0.8750);transform-origin:0 0;">7970,00</span>
<span class="t" style="left:759.20px;top:6.11px;font-size:14.40px;color:#f0f0f0;transform:scaleX(0.8750);transform-origin:0 0;">7938,00</span>
<span class="t" style="left:810.86px;top:6.11px;font-size:14.40px;color:#f0f0f0;transform:scaleX(0.8750);transform-origin:0 0;">7846,00</span>
<span class="t" style="left:862.52px;top:6.11px;font-size:14.40px;color:#f0f0f0;transform:scaleX(0.8750);transform-origin:0 0;">7822,00</span>
<span class="t" style="left:914.18px;top:6.11px;font-size:14.40px;color:#f0f0f0;transform:scaleX(0.8750);transform-origin:0 0;">7920,00</span>
<span class="t" style="left:965.84px;top:6.11px;font-size:14.40px;color:#f0f0f0;transform:scaleX(0.8750);transform-origin:0 0;">8010,00</span>
<span class="t" style="left:1017.50px;top:6.11px;font-size:14.40px;color:#f0f0f0;transform:scaleX(0.8750);transform-origin:0 0;">7943,00</span>
<span class="t" style="left:1069.16px;top:6.11px;font-size:14.40px;color:#f0f0f0;transform:scaleX(0.8750);transform-origin:0 0;">7951,00</span>
<span class="t" style="left:1120.82px;top:6.11px;font-size:14.40px;color:#f0f0f0;transform:scaleX(0.8750);transform-origin:0 0;">7988,00</span>
<span class="t" style="left:1172.48px;top:6.11px;font-size:14.40px;color:#f0f0f0;transform:scaleX(0.8750);transform-origin:0 0;">7985,00</span>
</div>
<div class="abs" style="left:0;top:163.8px;width:100%;height:23.2px;background:#424242">
<span class="t" style="left:9.80px;top:5.28px;font-size:14.20px;color:#f6f6f6;font-weight:700;transform:scaleX(0.8930);transform-origin:0 0;">ΔE 2000</span>
<span class="t" style="left:124.90px;top:6.11px;font-size:14.40px;color:#f2f2f2;transform:scaleX(0.8750);transform-origin:0 0;">0,59</span>
<span class="t" style="left:183.80px;top:6.11px;font-size:14.40px;color:#f2f2f2;transform:scaleX(0.8750);transform-origin:0 0;">1,36</span>
<span class="t" style="left:242.60px;top:6.11px;font-size:14.40px;color:#f2f2f2;transform:scaleX(0.8750);transform-origin:0 0;">2,57</span>
<span class="t" style="left:294.26px;top:6.11px;font-size:14.40px;color:#f2f2f2;transform:scaleX(0.8750);transform-origin:0 0;">3,23</span>
<span class="t" style="left:345.92px;top:6.11px;font-size:14.40px;color:#f2f2f2;transform:scaleX(0.8750);transform-origin:0 0;">3,41</span>
<span class="t" style="left:397.58px;top:6.11px;font-size:14.40px;color:#f2f2f2;transform:scaleX(0.8750);transform-origin:0 0;">3,26</span>
<span class="t" style="left:449.24px;top:6.11px;font-size:14.40px;color:#f2f2f2;transform:scaleX(0.8750);transform-origin:0 0;">3,76</span>
<span class="t" style="left:500.90px;top:6.11px;font-size:14.40px;color:#f2f2f2;transform:scaleX(0.8750);transform-origin:0 0;">4,30</span>
<span class="t" style="left:552.56px;top:6.11px;font-size:14.40px;color:#f2f2f2;transform:scaleX(0.8750);transform-origin:0 0;">4,84</span>
<span class="t" style="left:604.22px;top:6.11px;font-size:14.40px;color:#f2f2f2;transform:scaleX(0.8750);transform-origin:0 0;">5,26</span>
<span class="t" style="left:655.88px;top:6.11px;font-size:14.40px;color:#f2f2f2;transform:scaleX(0.8750);transform-origin:0 0;">5,58</span>
<span class="t" style="left:707.54px;top:6.11px;font-size:14.40px;color:#f2f2f2;transform:scaleX(0.8750);transform-origin:0 0;">5,93</span>
<span class="t" style="left:759.20px;top:6.11px;font-size:14.40px;color:#f2f2f2;transform:scaleX(0.8750);transform-origin:0 0;">6,18</span>
<span class="t" style="left:810.86px;top:6.11px;font-size:14.40px;color:#f2f2f2;transform:scaleX(0.8750);transform-origin:0 0;">6,21</span>
<span class="t" style="left:862.52px;top:6.11px;font-size:14.40px;color:#f2f2f2;transform:scaleX(0.8750);transform-origin:0 0;">6,39</span>
<span class="t" style="left:914.18px;top:6.11px;font-size:14.40px;color:#f2f2f2;transform:scaleX(0.8750);transform-origin:0 0;">7,01</span>
<span class="t" style="left:965.84px;top:6.11px;font-size:14.40px;color:#f2f2f2;transform:scaleX(0.8750);transform-origin:0 0;">7,63</span>
<span class="t" style="left:1017.50px;top:6.11px;font-size:14.40px;color:#f2f2f2;transform:scaleX(0.8750);transform-origin:0 0;">7,67</span>
<span class="t" style="left:1069.16px;top:6.11px;font-size:14.40px;color:#f2f2f2;transform:scaleX(0.8750);transform-origin:0 0;">7,79</span>
<span class="t" style="left:1120.82px;top:6.11px;font-size:14.40px;color:#f2f2f2;transform:scaleX(0.8750);transform-origin:0 0;">8,59</span>
<span class="t" style="left:1172.48px;top:6.11px;font-size:14.40px;color:#f2f2f2;transform:scaleX(0.8750);transform-origin:0 0;">8,52</span>
</div>
<div class="abs" style="left:0;top:186.9px;width:100%;height:23.2px;background:#7e7e7e">
<span class="t" style="left:9.80px;top:5.28px;font-size:14.20px;color:#f6f6f6;font-weight:700;transform:scaleX(0.8553);transform-origin:0 0;">ΔE ITP</span>
<span class="t" style="left:124.90px;top:6.11px;font-size:14.40px;color:#f0f0f0;transform:scaleX(0.8750);transform-origin:0 0;">69,73</span>
<span class="t" style="left:183.80px;top:6.11px;font-size:14.40px;color:#f0f0f0;transform:scaleX(0.8750);transform-origin:0 0;">32,38</span>
<span class="t" style="left:242.60px;top:6.11px;font-size:14.40px;color:#f0f0f0;transform:scaleX(0.8750);transform-origin:0 0;">23,85</span>
<span class="t" style="left:294.26px;top:6.11px;font-size:14.40px;color:#f0f0f0;transform:scaleX(0.8750);transform-origin:0 0;">19,42</span>
<span class="t" style="left:345.92px;top:6.11px;font-size:14.40px;color:#f0f0f0;transform:scaleX(0.8750);transform-origin:0 0;">13,89</span>
<span class="t" style="left:397.58px;top:6.11px;font-size:14.40px;color:#f0f0f0;transform:scaleX(0.8750);transform-origin:0 0;">10,53</span>
<span class="t" style="left:449.24px;top:6.11px;font-size:14.40px;color:#f0f0f0;transform:scaleX(0.8750);transform-origin:0 0;">11,09</span>
<span class="t" style="left:500.90px;top:6.11px;font-size:14.40px;color:#f0f0f0;transform:scaleX(0.8750);transform-origin:0 0;">11,11</span>
<span class="t" style="left:552.56px;top:6.11px;font-size:14.40px;color:#f0f0f0;transform:scaleX(0.8750);transform-origin:0 0;">11,31</span>
<span class="t" style="left:604.22px;top:6.11px;font-size:14.40px;color:#f0f0f0;transform:scaleX(0.8750);transform-origin:0 0;">11,19</span>
<span class="t" style="left:655.88px;top:6.11px;font-size:14.40px;color:#f0f0f0;transform:scaleX(0.8750);transform-origin:0 0;">11,19</span>
<span class="t" style="left:707.54px;top:6.11px;font-size:14.40px;color:#f0f0f0;transform:scaleX(0.8750);transform-origin:0 0;">11,35</span>
<span class="t" style="left:759.20px;top:6.11px;font-size:14.40px;color:#f0f0f0;transform:scaleX(0.8750);transform-origin:0 0;">11,30</span>
<span class="t" style="left:810.86px;top:6.11px;font-size:14.40px;color:#f0f0f0;transform:scaleX(0.8750);transform-origin:0 0;">10,79</span>
<span class="t" style="left:862.52px;top:6.11px;font-size:14.40px;color:#f0f0f0;transform:scaleX(0.8750);transform-origin:0 0;">10,70</span>
<span class="t" style="left:914.18px;top:6.11px;font-size:14.40px;color:#f0f0f0;transform:scaleX(0.8750);transform-origin:0 0;">11,31</span>
<span class="t" style="left:965.84px;top:6.11px;font-size:14.40px;color:#f0f0f0;transform:scaleX(0.8750);transform-origin:0 0;">11,94</span>
<span class="t" style="left:1017.50px;top:6.11px;font-size:14.40px;color:#f0f0f0;transform:scaleX(0.8750);transform-origin:0 0;">11,64</span>
<span class="t" style="left:1069.16px;top:6.11px;font-size:14.40px;color:#f0f0f0;transform:scaleX(0.8750);transform-origin:0 0;">11,72</span>
<span class="t" style="left:1120.82px;top:6.11px;font-size:14.40px;color:#f0f0f0;transform:scaleX(0.8750);transform-origin:0 0;">12,60</span>
<span class="t" style="left:1172.48px;top:6.11px;font-size:14.40px;color:#f0f0f0;transform:scaleX(0.8750);transform-origin:0 0;">12,41</span>
</div>
<div class="abs" style="left:0;top:210.0px;width:100%;height:16px;background:#585858"></div>
<div class="abs" style="left:14px;top:211.3px;width:849px;height:13px;border-radius:6.5px;background:#3f3f3f"></div>
<div class="abs" style="left:1px;top:211.5px;width:11px;height:12.6px;border-radius:2px;background:#747474;border:1px solid #8c8c8c"></div>
<svg style="left:3.5px;top:213.3px" width="6" height="9" viewBox="0 0 6 9"><path d="M5.6 0.3V8.7L0.5 4.5Z" fill="#303030"/></svg>
<div class="abs" style="right:1.5px;top:211.5px;width:11px;height:12.6px;border-radius:2px;background:#747474;border:1px solid #8c8c8c"></div>
<svg style="right:4px;top:213.3px" width="6" height="9" viewBox="0 0 6 9"><path d="M0.4 0.3V8.7L5.5 4.5Z" fill="#303030"/></svg>
</div>
<div id="bottombar" class="abs" style="left:0;top:929px;width:1667px;height:77px;overflow:hidden">
<div class="abs" style="left:-34.3px;top:0.5px;width:62.4px;height:61px;border-radius:5.5px;background:linear-gradient(#9a9a9a 0,#8a8a8a 45%,#606060 100%);box-shadow:inset 0 1px 0 #aaa"></div>
<div class="abs" style="left:-28.1px;top:6.8px;width:50px;height:30px;border-radius:4px;background:rgb(13,13,13);box-shadow:inset 0 1px 2px rgba(0,0,0,0.35),0 1px 0 rgba(255,255,255,0.18)"></div>
<div class="abs" style="left:30.7px;top:0.5px;width:62.4px;height:61px;border-radius:5.5px;background:linear-gradient(#9a9a9a 0,#8a8a8a 45%,#606060 100%);box-shadow:inset 0 1px 0 #aaa"></div>
<div class="abs" style="left:36.9px;top:6.8px;width:50px;height:30px;border-radius:4px;background:rgb(26,26,26);box-shadow:inset 0 1px 2px rgba(0,0,0,0.35),0 1px 0 rgba(255,255,255,0.18)"></div>
<span class="t" style="left:54.56px;top:44.83px;font-size:13.20px;color:#303030;font-weight:700;text-shadow:0 0 1px rgba(40,40,40,0.6);">10</span>
<div class="abs" style="left:95.7px;top:0.5px;width:62.4px;height:61px;border-radius:5.5px;background:linear-gradient(#9a9a9a 0,#8a8a8a 45%,#606060 100%);box-shadow:inset 0 1px 0 #aaa"></div>
<div class="abs" style="left:101.9px;top:6.8px;width:50px;height:30px;border-radius:4px;background:rgb(38,38,38);box-shadow:inset 0 1px 2px rgba(0,0,0,0.35),0 1px 0 rgba(255,255,255,0.18)"></div>
<span class="t" style="left:119.56px;top:44.83px;font-size:13.20px;color:#303030;font-weight:700;text-shadow:0 0 1px rgba(40,40,40,0.6);">15</span>
<div class="abs" style="left:160.7px;top:0.5px;width:62.4px;height:61px;border-radius:5.5px;background:linear-gradient(#9a9a9a 0,#8a8a8a 45%,#606060 100%);box-shadow:inset 0 1px 0 #aaa"></div>
<div class="abs" style="left:166.9px;top:6.8px;width:50px;height:30px;border-radius:4px;background:rgb(51,51,51);box-shadow:inset 0 1px 2px rgba(0,0,0,0.35),0 1px 0 rgba(255,255,255,0.18)"></div>
<span class="t" style="left:184.56px;top:44.83px;font-size:13.20px;color:#303030;font-weight:700;text-shadow:0 0 1px rgba(40,40,40,0.6);">20</span>
<div class="abs" style="left:225.7px;top:0.5px;width:62.4px;height:61px;border-radius:5.5px;background:linear-gradient(#9a9a9a 0,#8a8a8a 45%,#606060 100%);box-shadow:inset 0 1px 0 #aaa"></div>
<div class="abs" style="left:231.9px;top:6.8px;width:50px;height:30px;border-radius:4px;background:rgb(64,64,64);box-shadow:inset 0 1px 2px rgba(0,0,0,0.35),0 1px 0 rgba(255,255,255,0.18)"></div>
<span class="t" style="left:249.56px;top:44.83px;font-size:13.20px;color:#303030;font-weight:700;text-shadow:0 0 1px rgba(40,40,40,0.6);">25</span>
<div class="abs" style="left:290.7px;top:0.5px;width:62.4px;height:61px;border-radius:5.5px;background:linear-gradient(#9a9a9a 0,#8a8a8a 45%,#606060 100%);box-shadow:inset 0 1px 0 #aaa"></div>
<div class="abs" style="left:296.9px;top:6.8px;width:50px;height:30px;border-radius:4px;background:rgb(76,76,76);box-shadow:inset 0 1px 2px rgba(0,0,0,0.35),0 1px 0 rgba(255,255,255,0.18)"></div>
<span class="t" style="left:314.56px;top:44.83px;font-size:13.20px;color:#303030;font-weight:700;text-shadow:0 0 1px rgba(40,40,40,0.6);">30</span>
<div class="abs" style="left:355.7px;top:0.5px;width:62.4px;height:61px;border-radius:5.5px;background:linear-gradient(#9a9a9a 0,#8a8a8a 45%,#606060 100%);box-shadow:inset 0 1px 0 #aaa"></div>
<div class="abs" style="left:361.9px;top:6.8px;width:50px;height:30px;border-radius:4px;background:rgb(89,89,89);box-shadow:inset 0 1px 2px rgba(0,0,0,0.35),0 1px 0 rgba(255,255,255,0.18)"></div>
<span class="t" style="left:379.56px;top:44.83px;font-size:13.20px;color:#303030;font-weight:700;text-shadow:0 0 1px rgba(40,40,40,0.6);">35</span>
<div class="abs" style="left:420.7px;top:0.5px;width:62.4px;height:61px;border-radius:5.5px;background:linear-gradient(#9a9a9a 0,#8a8a8a 45%,#606060 100%);box-shadow:inset 0 1px 0 #aaa"></div>
<div class="abs" style="left:426.9px;top:6.8px;width:50px;height:30px;border-radius:4px;background:rgb(102,102,102);box-shadow:inset 0 1px 2px rgba(0,0,0,0.35),0 1px 0 rgba(255,255,255,0.18)"></div>
<span class="t" style="left:444.56px;top:44.83px;font-size:13.20px;color:#303030;font-weight:700;text-shadow:0 0 1px rgba(40,40,40,0.6);">40</span>
<div class="abs" style="left:485.7px;top:0.5px;width:62.4px;height:61px;border-radius:5.5px;background:linear-gradient(#9a9a9a 0,#8a8a8a 45%,#606060 100%);box-shadow:inset 0 1px 0 #aaa"></div>
<div class="abs" style="left:491.9px;top:6.8px;width:50px;height:30px;border-radius:4px;background:rgb(115,115,115);box-shadow:inset 0 1px 2px rgba(0,0,0,0.35),0 1px 0 rgba(255,255,255,0.18)"></div>
<span class="t" style="left:509.56px;top:44.83px;font-size:13.20px;color:#303030;font-weight:700;text-shadow:0 0 1px rgba(40,40,40,0.6);">45</span>
<div class="abs" style="left:550.7px;top:0.5px;width:62.4px;height:61px;border-radius:5.5px;background:linear-gradient(#9a9a9a 0,#8a8a8a 45%,#606060 100%);box-shadow:inset 0 1px 0 #aaa"></div>
<div class="abs" style="left:556.9px;top:6.8px;width:50px;height:30px;border-radius:4px;background:rgb(127,127,127);box-shadow:inset 0 1px 2px rgba(0,0,0,0.35),0 1px 0 rgba(255,255,255,0.18)"></div>
<span class="t" style="left:574.56px;top:44.83px;font-size:13.20px;color:#303030;font-weight:700;text-shadow:0 0 1px rgba(40,40,40,0.6);">50</span>
<div class="abs" style="left:615.7px;top:0.5px;width:62.4px;height:61px;border-radius:5.5px;background:linear-gradient(#9a9a9a 0,#8a8a8a 45%,#606060 100%);box-shadow:inset 0 1px 0 #aaa"></div>
<div class="abs" style="left:621.9px;top:6.8px;width:50px;height:30px;border-radius:4px;background:rgb(140,140,140);box-shadow:inset 0 1px 2px rgba(0,0,0,0.35),0 1px 0 rgba(255,255,255,0.18)"></div>
<span class="t" style="left:639.56px;top:44.83px;font-size:13.20px;color:#303030;font-weight:700;text-shadow:0 0 1px rgba(40,40,40,0.6);">55</span>
<div class="abs" style="left:680.7px;top:0.5px;width:62.4px;height:61px;border-radius:5.5px;background:linear-gradient(#9a9a9a 0,#8a8a8a 45%,#606060 100%);box-shadow:inset 0 1px 0 #aaa"></div>
<div class="abs" style="left:686.9px;top:6.8px;width:50px;height:30px;border-radius:4px;background:rgb(153,153,153);box-shadow:inset 0 1px 2px rgba(0,0,0,0.35),0 1px 0 rgba(255,255,255,0.18)"></div>
<span class="t" style="left:704.56px;top:44.83px;font-size:13.20px;color:#303030;font-weight:700;text-shadow:0 0 1px rgba(40,40,40,0.6);">60</span>
<div class="abs" style="left:745.7px;top:0.5px;width:62.4px;height:61px;border-radius:5.5px;background:linear-gradient(#9a9a9a 0,#8a8a8a 45%,#606060 100%);box-shadow:inset 0 1px 0 #aaa"></div>
<div class="abs" style="left:751.9px;top:6.8px;width:50px;height:30px;border-radius:4px;background:rgb(166,166,166);box-shadow:inset 0 1px 2px rgba(0,0,0,0.35),0 1px 0 rgba(255,255,255,0.18)"></div>
<span class="t" style="left:769.56px;top:44.83px;font-size:13.20px;color:#303030;font-weight:700;text-shadow:0 0 1px rgba(40,40,40,0.6);">65</span>
<div class="abs" style="left:810.7px;top:0.5px;width:62.4px;height:61px;border-radius:5.5px;background:linear-gradient(#9a9a9a 0,#8a8a8a 45%,#606060 100%);box-shadow:inset 0 1px 0 #aaa"></div>
<div class="abs" style="left:816.9px;top:6.8px;width:50px;height:30px;border-radius:4px;background:rgb(178,178,178);box-shadow:inset 0 1px 2px rgba(0,0,0,0.35),0 1px 0 rgba(255,255,255,0.18)"></div>
<span class="t" style="left:834.56px;top:44.83px;font-size:13.20px;color:#303030;font-weight:700;text-shadow:0 0 1px rgba(40,40,40,0.6);">70</span>
<div class="abs" style="left:875.7px;top:0.5px;width:62.4px;height:61px;border-radius:5.5px;background:linear-gradient(#9a9a9a 0,#8a8a8a 45%,#606060 100%);box-shadow:inset 0 1px 0 #aaa"></div>
<div class="abs" style="left:881.9px;top:6.8px;width:50px;height:30px;border-radius:4px;background:rgb(191,191,191);box-shadow:inset 0 1px 2px rgba(0,0,0,0.35),0 1px 0 rgba(255,255,255,0.18)"></div>
<span class="t" style="left:899.56px;top:44.83px;font-size:13.20px;color:#303030;font-weight:700;text-shadow:0 0 1px rgba(40,40,40,0.6);">75</span>
<div class="abs" style="left:940.7px;top:0.5px;width:62.4px;height:61px;border-radius:5.5px;background:linear-gradient(#9a9a9a 0,#8a8a8a 45%,#606060 100%);box-shadow:inset 0 1px 0 #aaa"></div>
<div class="abs" style="left:946.9px;top:6.8px;width:50px;height:30px;border-radius:4px;background:rgb(204,204,204);box-shadow:inset 0 1px 2px rgba(0,0,0,0.35),0 1px 0 rgba(255,255,255,0.18)"></div>
<span class="t" style="left:964.56px;top:44.83px;font-size:13.20px;color:#303030;font-weight:700;text-shadow:0 0 1px rgba(40,40,40,0.6);">80</span>
<div class="abs" style="left:1005.7px;top:0.5px;width:62.4px;height:61px;border-radius:5.5px;background:linear-gradient(#9a9a9a 0,#8a8a8a 45%,#606060 100%);box-shadow:inset 0 1px 0 #aaa"></div>
<div class="abs" style="left:1011.9px;top:6.8px;width:50px;height:30px;border-radius:4px;background:rgb(217,217,217);box-shadow:inset 0 1px 2px rgba(0,0,0,0.35),0 1px 0 rgba(255,255,255,0.18)"></div>
<span class="t" style="left:1029.56px;top:44.83px;font-size:13.20px;color:#303030;font-weight:700;text-shadow:0 0 1px rgba(40,40,40,0.6);">85</span>
<div class="abs" style="left:1070.7px;top:0.5px;width:62.4px;height:61px;border-radius:5.5px;background:linear-gradient(#9a9a9a 0,#8a8a8a 45%,#606060 100%);box-shadow:inset 0 1px 0 #aaa"></div>
<div class="abs" style="left:1076.9px;top:6.8px;width:50px;height:30px;border-radius:4px;background:rgb(229,229,229);box-shadow:inset 0 1px 2px rgba(0,0,0,0.35),0 1px 0 rgba(255,255,255,0.18)"></div>
<span class="t" style="left:1094.56px;top:44.83px;font-size:13.20px;color:#303030;font-weight:700;text-shadow:0 0 1px rgba(40,40,40,0.6);">90</span>
<div class="abs" style="left:1135.7px;top:0.5px;width:62.4px;height:61px;border-radius:5.5px;background:linear-gradient(#9a9a9a 0,#8a8a8a 45%,#606060 100%);box-shadow:inset 0 1px 0 #aaa"></div>
<div class="abs" style="left:1141.9px;top:6.8px;width:50px;height:30px;border-radius:4px;background:rgb(242,242,242);box-shadow:inset 0 1px 2px rgba(0,0,0,0.35),0 1px 0 rgba(255,255,255,0.18)"></div>
<span class="t" style="left:1159.56px;top:44.83px;font-size:13.20px;color:#303030;font-weight:700;text-shadow:0 0 1px rgba(40,40,40,0.6);">95</span>
<div class="abs" style="left:1200.7px;top:0.5px;width:62.4px;height:61px;border-radius:5.5px;background:linear-gradient(#222,#3b3b3b);box-shadow:inset 0 1px 0 #333"></div>
<div class="abs" style="left:1206.9px;top:6.8px;width:50px;height:30px;border-radius:4px;background:rgb(255,255,255);box-shadow:inset 0 1px 2px rgba(0,0,0,0.35),0 1px 0 rgba(255,255,255,0.05)"></div>
<span class="t" style="left:1220.89px;top:44.83px;font-size:13.20px;color:#ffffff;font-weight:700;">100</span>
<div class="abs" style="left:0;top:61.2px;width:1264px;height:16px;background:#5a5a5a"></div>
<div class="abs" style="left:105px;top:62.6px;width:1139px;height:14px;border-radius:7px;background:#454545"></div>
<div class="abs" style="left:0.5px;top:62.6px;width:12.5px;height:13.4px;border-radius:2px;background:#7a7a7a;border:1px solid #949494"></div>
<svg style="left:3.5px;top:65px" width="6" height="9" viewBox="0 0 6 9"><path d="M5.6 0.3V8.7L0.5 4.5Z" fill="#303030"/></svg>
<div class="abs" style="left:1249.5px;top:62.6px;width:13px;height:13.4px;border-radius:2px;background:#7a7a7a;border:1px solid #949494"></div>
<svg style="left:1253.5px;top:65px" width="6" height="9" viewBox="0 0 6 9"><path d="M0.4 0.3V8.7L5.5 4.5Z" fill="#303030"/></svg>
<div class="abs" style="left:1264.3px;top:0.5px;width:59.2px;height:23px;border-radius:5px 5px 0 0;background:linear-gradient(#8c8c8c,#6c6c6c);box-shadow:inset 0 1px 0 #a0a0a0"></div>
<div class="abs" style="left:1285.2px;top:2.6px;width:19px;height:19px;border-radius:50%;background:linear-gradient(#6a6a6a,#8a8a8a)"></div>
<svg style="left:1288.7px;top:8.5px" width="12" height="7" viewBox="0 0 12 7"><path d="M0.3 6.7H11.7L6 0.4Z" fill="#2a2a2a"/></svg>
<div class="abs" style="left:1264.3px;top:24.3px;width:59.2px;height:53px;background:linear-gradient(#7a7a7a,#5c5c5c);box-shadow:inset 0 1px 0 #999"></div>
<div class="abs" style="left:1274.2px;top:30.8px;width:39.6px;height:38.6px;border-radius:6.5px;border:3px solid #222;background:linear-gradient(#9a9a9a 0,#909090 52%,#7c7c7c 52%,#848484 100%)"></div>
<div class="abs" style="left:1285.6px;top:41.6px;width:17.6px;height:17.4px;background:linear-gradient(#1c1c1c 0,#181818 52%,#000 52%)"></div>
<div class="abs" style="left:1324.6px;top:0.3px;width:57.0px;height:37.2px;background:linear-gradient(#a0a0a0 0,#8c8c8c 40%,#6a6a6a 100%);border-radius:5px 0 0 0;"></div>
<div class="abs" style="left:1341.9px;top:6.6px;width:25px;height:25px;border-radius:50%;background:linear-gradient(#6e6e6e,#9a9a9a)"></div>
<div class="abs" style="left:1382.8px;top:0.3px;width:55.4px;height:37.2px;background:linear-gradient(#a0a0a0 0,#8c8c8c 40%,#6a6a6a 100%);"></div>
<div class="abs" style="left:1399.2px;top:6.6px;width:25px;height:25px;border-radius:50%;background:linear-gradient(#6e6e6e,#9a9a9a)"></div>
<div class="abs" style="left:1439.4px;top:0.3px;width:55.4px;height:37.2px;background:linear-gradient(#a0a0a0 0,#8c8c8c 40%,#6a6a6a 100%);"></div>
<div class="abs" style="left:1455.3px;top:6.6px;width:25px;height:25px;border-radius:50%;background:linear-gradient(#6e6e6e,#9a9a9a)"></div>
<div class="abs" style="left:1496.0px;top:0.3px;width:55.2px;height:37.2px;background:linear-gradient(#a0a0a0 0,#8c8c8c 40%,#6a6a6a 100%);"></div>
<div class="abs" style="left:1511.5px;top:6.6px;width:25px;height:25px;border-radius:50%;background:linear-gradient(#6e6e6e,#9a9a9a)"></div>
<div class="abs" style="left:1552.4px;top:0.3px;width:54.6px;height:37.2px;background:linear-gradient(#a0a0a0 0,#8c8c8c 40%,#6a6a6a 100%);"></div>
<div class="abs" style="left:1567.7px;top:6.6px;width:25px;height:25px;border-radius:50%;background:linear-gradient(#6e6e6e,#9a9a9a)"></div>
<div class="abs" style="left:1608.2px;top:0.3px;width:55.6px;height:37.2px;background:linear-gradient(#a0a0a0 0,#8c8c8c 40%,#6a6a6a 100%);"></div>
<div class="abs" style="left:1625.1px;top:6.6px;width:25px;height:25px;border-radius:50%;background:linear-gradient(#6e6e6e,#9a9a9a)"></div>
<svg style="left:0;top:0" width="1667" height="77" viewBox="0 929 1667 77">
<rect x="1349" y="942.6" width="10.8" height="10.8" fill="#333333"/>
<path d="M1407.3 941.8V954.6L1418.3 948.2Z" fill="#333333"/>
<path d="M1463.2 942.2H1460.6V954.2H1463.2M1472.4 942.2H1475V954.2H1472.4" fill="none" stroke="#333333" stroke-width="2.4"/><path d="M1464.6 948.4H1467.1M1468.7 948.4H1471.2" stroke="#333333" stroke-width="2"/>
<path d="M1524 948.2C1521.5 944.6 1516.6 944.4 1516.6 948.2C1516.6 952 1521.5 951.8 1524 948.2C1526.5 944.6 1531.4 944.4 1531.4 948.2C1531.4 952 1526.5 951.8 1524 948.2Z" fill="none" stroke="#333333" stroke-width="2"/>
<path d="M1574.6 947.4A5.8 5.8 0 0 1 1584.6 944.6M1585.8 949A5.8 5.8 0 0 1 1575.8 951.8" fill="none" stroke="#333333" stroke-width="2.4"/><path d="M1586.6 941.4V947H1581Z M1573.8 955V949.4H1579.4Z" fill="#333333"/>
</svg>
<div class="abs" style="left:1324.6px;top:39.4px;width:171px;height:38px;background:linear-gradient(#a0a0a0 0,#8a8a8a 45%,#666 100%);border-radius:4px 0 0 0"></div>
<div class="abs" style="left:1497px;top:39.4px;width:168px;height:38px;background:linear-gradient(#a0a0a0 0,#8a8a8a 45%,#666 100%)"></div>
<div class="abs" style="left:1351px;top:45.5px;width:25px;height:25px;border-radius:50%;background:linear-gradient(#6e6e6e,#9a9a9a)"></div>
<div class="abs" style="left:1618px;top:45.5px;width:25px;height:25px;border-radius:50%;background:linear-gradient(#6e6e6e,#9a9a9a)"></div>
<svg style="left:0;top:0" width="1667" height="77" viewBox="0 929 1667 77"><path d="M1363 982.6L1358.6 987L1363 991.4M1368.6 982.6L1364.2 987L1368.6 991.4" fill="none" stroke="#333" stroke-width="2.4"/><path d="M1626 982.6L1630.4 987L1626 991.4M1631.6 982.6L1636 987L1631.6 991.4" fill="none" stroke="#333" stroke-width="2.4"/></svg>
<span class="t" style="left:1397.50px;top:44.32px;font-size:27.50px;color:#2e2e2e;transform:scaleX(1.0305);transform-origin:0 0;text-shadow:0 0 2px rgba(30,30,30,0.75);-webkit-text-stroke:0.5px #2e2e2e;">Back</span>
<span class="t" style="left:1531.00px;top:44.32px;font-size:27.50px;color:#2e2e2e;transform:scaleX(1.1266);transform-origin:0 0;text-shadow:0 0 2px rgba(30,30,30,0.75);-webkit-text-stroke:0.5px #2e2e2e;">Next</span>
</div>
<div class="abs" style="left:1661.5px;top:0;width:5.5px;height:1006px;background:linear-gradient(90deg,rgba(0,0,0,0),rgba(0,0,0,0.22) 40%,rgba(0,0,0,0.5));pointer-events:none"></div>
</body></html>
